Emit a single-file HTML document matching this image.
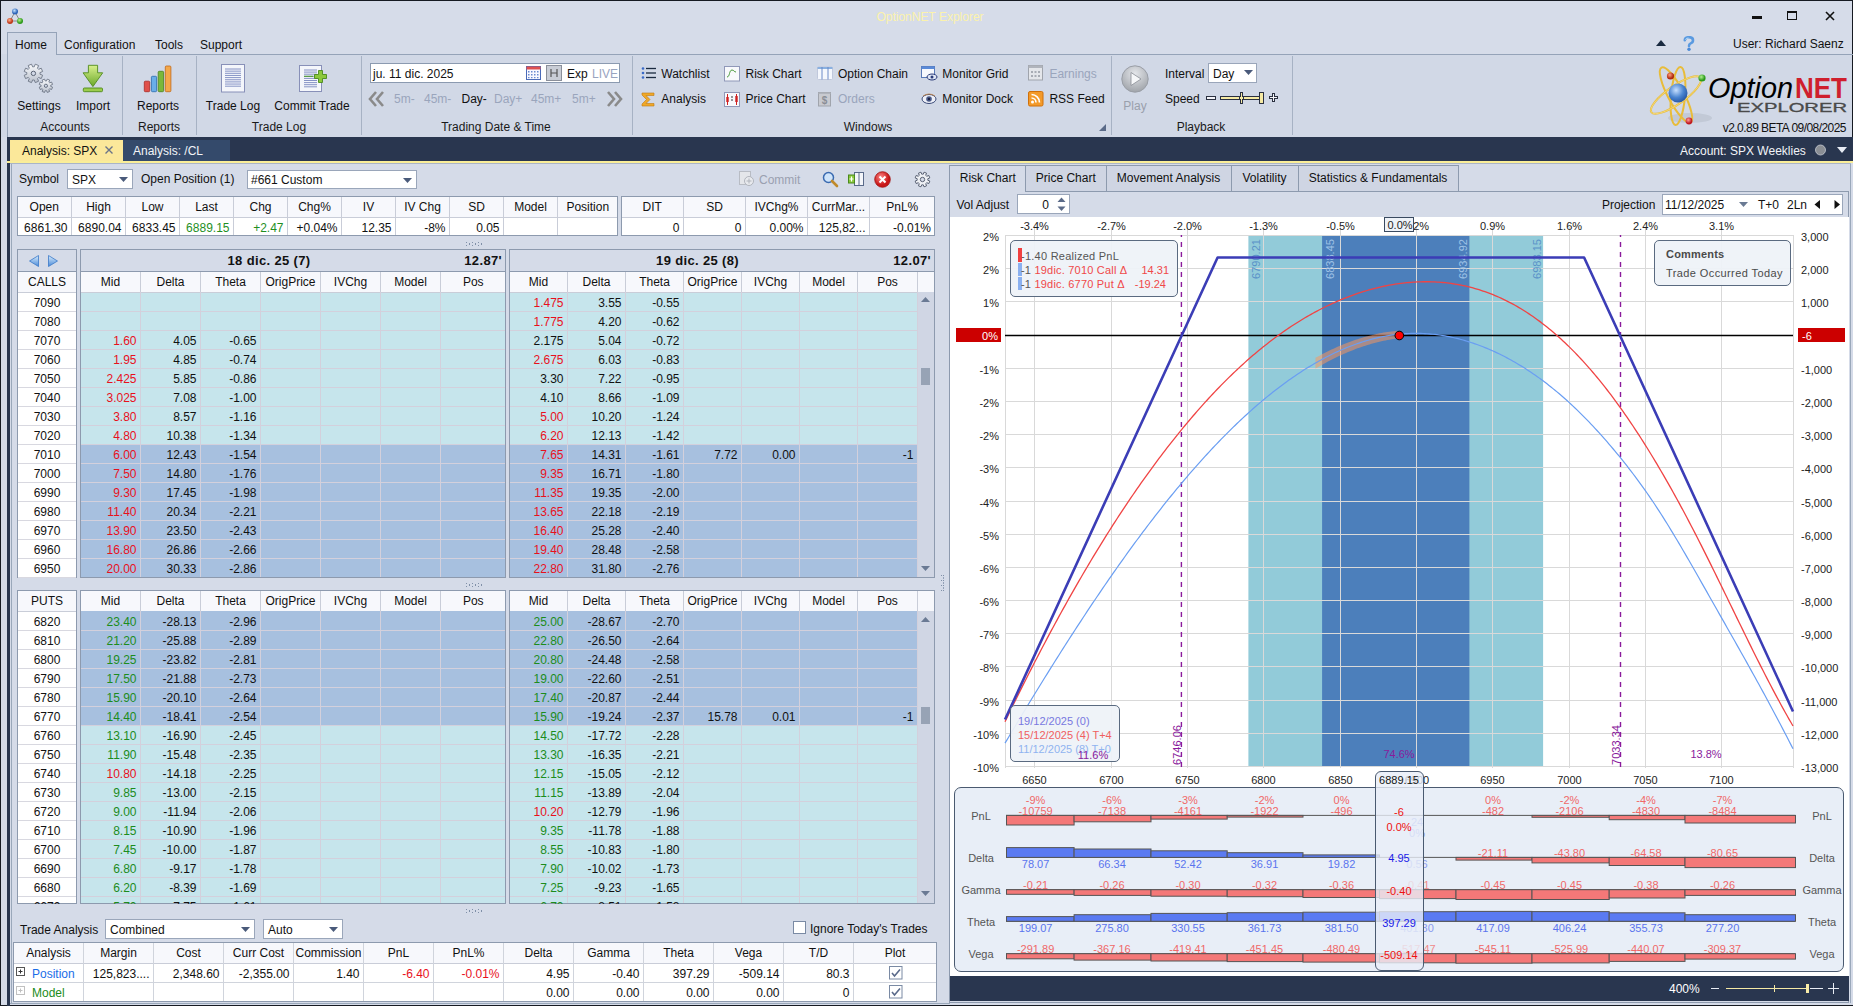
<!DOCTYPE html><html><head><meta charset="utf-8"><style>
html,body{margin:0;padding:0}
body{width:1853px;height:1006px;position:relative;overflow:hidden;font-family:"Liberation Sans",sans-serif;font-size:12px;background:#d5dbe8}
body>div,body>svg{position:absolute}
</style></head><body>
<div style="left:0px;top:0px;width:1853px;height:54px;background:#d6dce9;"></div>
<div style="left:0px;top:54px;width:1853px;height:83px;background:#d1d8e6;"></div>
<div style="left:0px;top:0px;width:1853px;height:1px;background:#161a22"></div>
<div style="left:0px;top:0px;width:1px;height:1006px;background:#161a22"></div>
<div style="left:1852px;top:0px;width:1px;height:1006px;background:#161a22"></div>
<div style="left:0px;top:1005px;width:1853px;height:1px;background:#161a22"></div>
<svg style="left:6px;top:7px" width="20" height="20" viewBox="0 0 20 20">
<line x1="9" y1="5" x2="4" y2="14" stroke="#888" stroke-width="1"/><line x1="9" y1="5" x2="14" y2="14" stroke="#888" stroke-width="1"/><line x1="4" y1="14" x2="14" y2="14" stroke="#888" stroke-width="1"/>
<defs><radialGradient id="gb" cx="40%" cy="35%"><stop offset="0" stop-color="#bfe0ff"/><stop offset="1" stop-color="#2d64b8"/></radialGradient>
<radialGradient id="gr" cx="40%" cy="35%"><stop offset="0" stop-color="#ffb08a"/><stop offset="1" stop-color="#c0381a"/></radialGradient>
<radialGradient id="gg" cx="40%" cy="35%"><stop offset="0" stop-color="#b8f08a"/><stop offset="1" stop-color="#2e9a1c"/></radialGradient></defs>
<circle cx="9" cy="4.5" r="3" fill="url(#gb)"/><circle cx="4" cy="14" r="3" fill="url(#gr)"/><circle cx="14" cy="14" r="3" fill="url(#gg)"/></svg>
<div style="left:780.0px;top:9.5px;width:300px;text-align:center;color:#fbf2ac;font-size:12px;line-height:14px;white-space:nowrap;">OptionNET Explorer</div>
<div style="left:1752px;top:16px;width:10px;height:3px;background:#111;"></div>
<div style="left:1787px;top:11px;width:10px;height:9px;border:1px solid #111;border-top-width:2px;box-sizing:border-box"></div>
<svg style="left:1825px;top:11px" width="10" height="10" viewBox="0 0 10 10"><path d="M1 1L9 9M9 1L1 9" stroke="#111" stroke-width="1.6"/></svg>
<div style="left:7px;top:32px;width:50px;height:23px;border:1px solid #95a3b8;border-bottom:none;box-sizing:border-box;background:#d1d8e6"></div>
<div style="left:56px;top:54px;width:1797px;height:1px;background:#95a3b8"></div>
<div style="left:7px;top:54px;width:1px;height:83px;background:#95a3b8"></div>
<div style="left:15px;top:37.5px;color:#111;font-size:12px;line-height:14px;white-space:nowrap;">Home</div>
<div style="left:64px;top:37.5px;color:#111;font-size:12px;line-height:14px;white-space:nowrap;">Configuration</div>
<div style="left:155px;top:37.5px;color:#111;font-size:12px;line-height:14px;white-space:nowrap;">Tools</div>
<div style="left:200px;top:37.5px;color:#111;font-size:12px;line-height:14px;white-space:nowrap;">Support</div>
<svg style="left:1656px;top:40px" width="10" height="6" viewBox="0 0 10 6"><path d="M0 6L5 0L10 6Z" fill="#1a2a40"/></svg>
<svg style="left:1682px;top:36px" width="14" height="16" viewBox="0 0 14 16"><path d="M2.8 4.2 Q3 1.2 7 1.2 Q11 1.2 11 4.2 Q11 6.4 8.6 7.4 Q7 8 7 10" stroke="#5a9ae0" stroke-width="2.6" fill="none" stroke-linecap="round"/><path d="M3.5 3.6 Q4 2 6.5 2" stroke="#c8e6fa" stroke-width="0.9" fill="none"/><circle cx="7" cy="13.2" r="1.7" fill="#4a8ad8"/></svg>
<div style="left:1733px;top:36.5px;color:#111;font-size:12px;line-height:14px;white-space:nowrap;">User: Richard Saenz</div>
<div style="left:122px;top:56px;width:1px;height:79px;background:#a7b2c4"></div>
<div style="left:196px;top:56px;width:1px;height:79px;background:#a7b2c4"></div>
<div style="left:361px;top:56px;width:1px;height:79px;background:#a7b2c4"></div>
<div style="left:632px;top:56px;width:1px;height:79px;background:#a7b2c4"></div>
<div style="left:1111px;top:56px;width:1px;height:79px;background:#a7b2c4"></div>
<div style="left:1292px;top:56px;width:1px;height:79px;background:#a7b2c4"></div>
<div style="left:-85.0px;top:119.5px;width:300px;text-align:center;color:#1a1a1a;font-size:12px;line-height:14px;white-space:nowrap;">Accounts</div>
<div style="left:9.0px;top:119.5px;width:300px;text-align:center;color:#1a1a1a;font-size:12px;line-height:14px;white-space:nowrap;">Reports</div>
<div style="left:129.0px;top:119.5px;width:300px;text-align:center;color:#1a1a1a;font-size:12px;line-height:14px;white-space:nowrap;">Trade Log</div>
<div style="left:346.0px;top:119.5px;width:300px;text-align:center;color:#1a1a1a;font-size:12px;line-height:14px;white-space:nowrap;">Trading Date &amp; Time</div>
<div style="left:718.0px;top:119.5px;width:300px;text-align:center;color:#1a1a1a;font-size:12px;line-height:14px;white-space:nowrap;">Windows</div>
<div style="left:1051.0px;top:119.5px;width:300px;text-align:center;color:#1a1a1a;font-size:12px;line-height:14px;white-space:nowrap;">Playback</div>
<div style="left:-111.0px;top:98.5px;width:300px;text-align:center;color:#111;font-size:12px;line-height:14px;white-space:nowrap;">Settings</div>
<div style="left:-57.0px;top:98.5px;width:300px;text-align:center;color:#111;font-size:12px;line-height:14px;white-space:nowrap;">Import</div>
<div style="left:8.0px;top:98.5px;width:300px;text-align:center;color:#111;font-size:12px;line-height:14px;white-space:nowrap;">Reports</div>
<div style="left:83.0px;top:98.5px;width:300px;text-align:center;color:#111;font-size:12px;line-height:14px;white-space:nowrap;">Trade Log</div>
<div style="left:162.0px;top:98.5px;width:300px;text-align:center;color:#111;font-size:12px;line-height:14px;white-space:nowrap;">Commit Trade</div>
<div style="left:7px;top:137px;width:1846px;height:26px;background:#29364f;"></div>
<svg style="left:20px;top:60px" width="36" height="36" viewBox="20 60 36 36">
<defs><linearGradient id="ggear" x1="0" y1="0" x2="0" y2="1"><stop offset="0" stop-color="#fafbfd"/><stop offset="1" stop-color="#b9c0cc"/></linearGradient></defs>
<path d="M40.00 73.40L39.95 74.18L42.61 75.27L41.24 78.59L38.58 77.49L38.07 78.07L37.49 78.58L38.59 81.24L35.27 82.61L34.18 79.95L33.40 80.00L32.62 79.95L31.53 82.61L28.21 81.24L29.31 78.58L28.73 78.07L28.22 77.49L25.56 78.59L24.19 75.27L26.85 74.18L26.80 73.40L26.85 72.62L24.19 71.53L25.56 68.21L28.22 69.31L28.73 68.73L29.31 68.22L28.21 65.56L31.53 64.19L32.62 66.85L33.40 66.80L34.18 66.85L35.27 64.19L38.59 65.56L37.49 68.22L38.07 68.73L38.58 69.31L41.24 68.21L42.61 71.53L39.95 72.62Z" fill="url(#ggear)" stroke="#6d7686" stroke-width="0.9"/>
<circle cx="33.4" cy="73.4" r="2.2" fill="#d1d8e6" stroke="#5d6676" stroke-width="1"/>
<path d="M50.70 85.80L50.67 86.36L52.56 87.15L51.57 89.56L49.67 88.77L49.29 89.19L48.87 89.57L49.66 91.47L47.25 92.46L46.46 90.57L45.90 90.60L45.34 90.57L44.55 92.46L42.14 91.47L42.93 89.57L42.51 89.19L42.13 88.77L40.23 89.56L39.24 87.15L41.13 86.36L41.10 85.80L41.13 85.24L39.24 84.45L40.23 82.04L42.13 82.83L42.51 82.41L42.93 82.03L42.14 80.13L44.55 79.14L45.34 81.03L45.90 81.00L46.46 81.03L47.25 79.14L49.66 80.13L48.87 82.03L49.29 82.41L49.67 82.83L51.57 82.04L52.56 84.45L50.67 85.24Z" fill="url(#ggear)" stroke="#6d7686" stroke-width="0.9"/>
<circle cx="45.9" cy="85.8" r="1.6" fill="#d1d8e6" stroke="#5d6676" stroke-width="0.9"/>
</svg>
<svg style="left:80px;top:62px" width="26" height="32" viewBox="80 62 26 32">
<defs><linearGradient id="garr" x1="0" y1="0" x2="0" y2="1"><stop offset="0" stop-color="#d8f08c"/><stop offset="1" stop-color="#6aa82a"/></linearGradient></defs>
<path d="M88.4 65.3H97.6V72.8H102.7L92.9 86.6L83.1 72.8H88.4Z" fill="url(#garr)" stroke="#4f8a1c" stroke-width="0.9"/>
<rect x="83.3" y="88" width="19.2" height="3.7" rx="1" fill="#9ccc4c" stroke="#4f8a1c" stroke-width="0.9"/>
</svg>
<svg style="left:142px;top:64px" width="32" height="30" viewBox="142 64 32 30">
<rect x="144.3" y="81.2" width="5.4" height="10.5" rx="1" fill="#e0504a" stroke="#a82a24" stroke-width="0.8"/>
<rect x="151.4" y="76.3" width="5.2" height="15.4" rx="1" fill="#6aaee8" stroke="#2a6aac" stroke-width="0.8"/>
<rect x="158.2" y="71.3" width="5.4" height="20.4" rx="1" fill="#7ab83a" stroke="#4a8020" stroke-width="0.8"/>
<rect x="165.3" y="66" width="5.6" height="25.7" rx="1" fill="#f4a84a" stroke="#c0681a" stroke-width="0.8"/>
</svg>
<svg style="left:219px;top:62px" width="28" height="33" viewBox="219 62 28 33">
<rect x="221.5" y="64.5" width="23" height="27.5" fill="#f4f6fb" stroke="#8890b8" stroke-width="1"/><line x1="225" y1="69.00" x2="241" y2="69.00" stroke="#6a7ab8" stroke-width="0.8"/><line x1="225" y1="71.15" x2="241" y2="71.15" stroke="#6a7ab8" stroke-width="0.8"/><line x1="225" y1="73.30" x2="241" y2="73.30" stroke="#6a7ab8" stroke-width="0.8"/><line x1="225" y1="75.45" x2="241" y2="75.45" stroke="#6a7ab8" stroke-width="0.8"/><line x1="225" y1="77.60" x2="241" y2="77.60" stroke="#6a7ab8" stroke-width="0.8"/><line x1="225" y1="79.75" x2="241" y2="79.75" stroke="#6a7ab8" stroke-width="0.8"/><line x1="225" y1="81.90" x2="241" y2="81.90" stroke="#6a7ab8" stroke-width="0.8"/><line x1="225" y1="84.05" x2="241" y2="84.05" stroke="#6a7ab8" stroke-width="0.8"/><line x1="225" y1="86.20" x2="241" y2="86.20" stroke="#6a7ab8" stroke-width="0.8"/></svg>
<svg style="left:297px;top:62px" width="34" height="33" viewBox="297 62 34 33">
<rect x="299.5" y="65.5" width="22" height="26" fill="#f4f6fb" stroke="#8890b8" stroke-width="1"/><line x1="304" y1="70.00" x2="317" y2="70.00" stroke="#6a7ab8" stroke-width="0.8"/><line x1="304" y1="72.10" x2="317" y2="72.10" stroke="#6a7ab8" stroke-width="0.8"/><line x1="304" y1="74.20" x2="317" y2="74.20" stroke="#6a7ab8" stroke-width="0.8"/><line x1="304" y1="76.30" x2="317" y2="76.30" stroke="#6a7ab8" stroke-width="0.8"/><line x1="304" y1="78.40" x2="317" y2="78.40" stroke="#6a7ab8" stroke-width="0.8"/><line x1="304" y1="80.50" x2="317" y2="80.50" stroke="#6a7ab8" stroke-width="0.8"/><line x1="304" y1="82.60" x2="317" y2="82.60" stroke="#6a7ab8" stroke-width="0.8"/><line x1="304" y1="84.70" x2="317" y2="84.70" stroke="#6a7ab8" stroke-width="0.8"/><line x1="304" y1="86.80" x2="317" y2="86.80" stroke="#6a7ab8" stroke-width="0.8"/>
<line x1="304" y1="76.3" x2="313" y2="76.3" stroke="#4a9a2a" stroke-width="1"/>
<path d="M318.5 70.5H322.5V74.5H326.5V78.5H322.5V82.5H318.5V78.5H314.5V74.5H318.5Z" fill="#8cc83c" stroke="#4a8a1c" stroke-width="0.9"/>
</svg>
<div style="left:370px;top:63px;width:250px;height:20px;background:#fff;border:1px solid #8b9ab0;box-sizing:border-box;"></div>
<div style="left:373px;top:66.9px;color:#111;font-size:12px;line-height:14px;white-space:nowrap;">ju. 11 dic. 2025</div>
<svg style="left:525px;top:65px" width="18" height="16" viewBox="525 65 18 16">
<rect x="526.5" y="66.5" width="14" height="13" fill="#f8f8ff" stroke="#4a6ab8" stroke-width="1"/>
<rect x="526.5" y="66.5" width="14" height="3" fill="#e05050"/>
<g fill="#6a8ad0"><rect x="528" y="71" width="1.5" height="1.5"/><rect x="531" y="71" width="1.5" height="1.5"/><rect x="534" y="71" width="1.5" height="1.5"/><rect x="537" y="71" width="1.5" height="1.5"/>
<rect x="528" y="74" width="1.5" height="1.5"/><rect x="531" y="74" width="1.5" height="1.5"/><rect x="534" y="74" width="1.5" height="1.5"/><rect x="537" y="74" width="1.5" height="1.5"/>
<rect x="528" y="77" width="1.5" height="1.2"/><rect x="531" y="77" width="1.5" height="1.2"/><rect x="534" y="77" width="1.5" height="1.2"/><rect x="537" y="77" width="1.5" height="1.2"/></g></svg>
<div style="left:546px;top:65px;width:16px;height:16px;background:#c9cdd6;border:1px solid #8a8f9a;box-sizing:border-box"></div>
<svg style="left:546px;top:65px" width="16" height="16" viewBox="0 0 16 16"><path d="M5 4V12M11 4V12M5 8H11" stroke="#555" stroke-width="1.2"/></svg>
<div style="left:567px;top:66.9px;color:#111;font-size:12px;line-height:14px;white-space:nowrap;">Exp</div>
<div style="left:592px;top:66.9px;color:#98a4bf;font-size:12px;line-height:14px;white-space:nowrap;">LIVE</div>
<svg style="left:367px;top:90px" width="20" height="18" viewBox="0 0 20 18"><path d="M9 2L3 9L9 16M16 2L10 9L16 16" stroke="#8a8a8a" stroke-width="2.6" fill="none"/></svg>
<svg style="left:604px;top:90px" width="20" height="18" viewBox="0 0 20 18"><path d="M4 2L10 9L4 16M11 2L17 9L11 16" stroke="#8a8a8a" stroke-width="2.6" fill="none"/></svg>
<div style="left:394px;top:92.2px;color:#9aa5bc;font-size:12px;line-height:14px;white-space:nowrap;">5m-</div>
<div style="left:424px;top:92.2px;color:#9aa5bc;font-size:12px;line-height:14px;white-space:nowrap;">45m-</div>
<div style="left:461.5px;top:92.2px;color:#111;font-size:12px;line-height:14px;white-space:nowrap;">Day-</div>
<div style="left:494px;top:92.2px;color:#9aa5bc;font-size:12px;line-height:14px;white-space:nowrap;">Day+</div>
<div style="left:531px;top:92.2px;color:#9aa5bc;font-size:12px;line-height:14px;white-space:nowrap;">45m+</div>
<div style="left:572px;top:92.2px;color:#9aa5bc;font-size:12px;line-height:14px;white-space:nowrap;">5m+</div>
<div style="left:661.3px;top:66.8px;color:#111;font-size:12px;line-height:14px;white-space:nowrap;">Watchlist</div>
<div style="left:745.5px;top:66.8px;color:#111;font-size:12px;line-height:14px;white-space:nowrap;">Risk Chart</div>
<div style="left:838px;top:66.8px;color:#111;font-size:12px;line-height:14px;white-space:nowrap;">Option Chain</div>
<div style="left:942.3px;top:66.8px;color:#111;font-size:12px;line-height:14px;white-space:nowrap;">Monitor Grid</div>
<div style="left:1049.4px;top:66.8px;color:#9aa5bc;font-size:12px;line-height:14px;white-space:nowrap;">Earnings</div>
<div style="left:661.3px;top:92.1px;color:#111;font-size:12px;line-height:14px;white-space:nowrap;">Analysis</div>
<div style="left:745.5px;top:92.1px;color:#111;font-size:12px;line-height:14px;white-space:nowrap;">Price Chart</div>
<div style="left:838px;top:92.1px;color:#9aa5bc;font-size:12px;line-height:14px;white-space:nowrap;">Orders</div>
<div style="left:942.3px;top:92.1px;color:#111;font-size:12px;line-height:14px;white-space:nowrap;">Monitor Dock</div>
<div style="left:1049.4px;top:92.1px;color:#111;font-size:12px;line-height:14px;white-space:nowrap;">RSS Feed</div>
<svg style="left:640px;top:66px" width="18" height="14" viewBox="0 0 18 14">
<g fill="#3a6ac8"><circle cx="3" cy="2.5" r="1.3"/><circle cx="3" cy="7" r="1.3"/><circle cx="3" cy="11.5" r="1.3"/></g>
<g stroke="#1a2a40" stroke-width="1.3"><line x1="6" y1="2.5" x2="16" y2="2.5"/><line x1="6" y1="7" x2="16" y2="7"/><line x1="6" y1="11.5" x2="16" y2="11.5"/></g></svg>
<svg style="left:724px;top:66px" width="16" height="16" viewBox="0 0 16 16"><rect x="0.5" y="0.5" width="15" height="14.5" fill="#f8f9fc" stroke="#9098b8"/><path d="M3 11C6 11 5 4 8 4 C10 4 10 6 12 6" stroke="#4a9a3a" stroke-width="1" fill="none"/></svg>
<svg style="left:817px;top:66px" width="16" height="15" viewBox="0 0 16 15"><rect x="0.5" y="1" width="15" height="12.5" rx="1" fill="#f4f7fd" stroke="#c0c8dc"/><rect x="0.5" y="1" width="15" height="2" fill="#8ab0e0"/><line x1="5" y1="1" x2="5" y2="13.5" stroke="#6a8ac8"/><line x1="11" y1="1" x2="11" y2="13.5" stroke="#6a8ac8"/></svg>
<svg style="left:921px;top:66px" width="17" height="15" viewBox="0 0 17 15"><rect x="0.5" y="0.5" width="13" height="11" fill="#f6f8fd" stroke="#5a7ab8"/><rect x="0.5" y="0.5" width="13" height="2.5" fill="#5a8ad8"/><ellipse cx="11" cy="11" rx="5" ry="3" fill="#dfe6f5" stroke="#2a3a78" stroke-width="1"/><circle cx="11" cy="11" r="1.5" fill="#2a3a78"/></svg>
<svg style="left:1028px;top:65px" width="16" height="16" viewBox="0 0 16 16"><rect x="0.5" y="0.5" width="14" height="14.5" fill="#e4e6ea" stroke="#a0a4ac"/><rect x="0.5" y="0.5" width="14" height="2.5" fill="#b0b4bc"/><g fill="#a8acb4"><rect x="3" y="6" width="2" height="2"/><rect x="6.5" y="6" width="2" height="2"/><rect x="10" y="6" width="2" height="2"/><rect x="3" y="10" width="2" height="2"/><rect x="6.5" y="10" width="2" height="2"/><rect x="10" y="10" width="2" height="2"/></g></svg>
<svg style="left:641px;top:92px" width="15" height="15" viewBox="0 0 15 15"><path d="M1 1H13V3.5H5L9 7.5L5 11.5H13V14H1V12L5.5 7.5L1 3Z" fill="#f0a828" stroke="#c07810" stroke-width="0.6"/></svg>
<svg style="left:724px;top:92px" width="16" height="15" viewBox="0 0 16 15"><rect x="0.5" y="0.5" width="15" height="14" fill="#f8f9fc" stroke="#9098b8"/><g stroke="#d02020" stroke-width="1"><line x1="3.5" y1="2" x2="3.5" y2="13"/><line x1="12.5" y1="2" x2="12.5" y2="13"/></g><rect x="2.3" y="5" width="2.4" height="5" fill="#d02020"/><rect x="11.3" y="4" width="2.4" height="6" fill="#d02020"/><path d="M7 5H9M7 8H9" stroke="#333"/></svg>
<svg style="left:818px;top:92px" width="14" height="15" viewBox="0 0 14 15"><rect x="0.5" y="0.5" width="12" height="13.5" fill="#c8cad0" stroke="#a0a4ac"/><rect x="0.5" y="0.5" width="12" height="1.5" fill="#b0b4bc"/><text x="6.5" y="12" font-size="10" font-family="Liberation Sans" text-anchor="middle" fill="#8a8e96" font-weight="bold">$</text></svg>
<svg style="left:921px;top:93px" width="16" height="12" viewBox="0 0 16 12"><ellipse cx="8" cy="6" rx="7" ry="4.5" fill="#eef0f8" stroke="#3a4a78" stroke-width="1"/><circle cx="8" cy="6" r="2.8" fill="#4a5a88"/><circle cx="8" cy="6" r="1.2" fill="#1a2040"/><path d="M2 3Q8 -1 14 3" stroke="#c08040" stroke-width="0.8" fill="none"/></svg>
<svg style="left:1028px;top:91px" width="16" height="16" viewBox="0 0 16 16"><rect x="0.5" y="0.5" width="14.5" height="14.5" rx="1.5" fill="#f39a2a" stroke="#d0700a"/><circle cx="4.5" cy="11" r="1.5" fill="#fff"/><path d="M3.5 7A4.5 4.5 0 0 1 8 11.5M3.5 3.5A8 8 0 0 1 11.5 11.5" stroke="#fff" stroke-width="1.6" fill="none"/></svg>
<svg style="left:1098px;top:123px" width="9" height="9" viewBox="0 0 9 9"><path d="M8 1V8H1Z" fill="#5a6a88"/></svg>
<svg style="left:1120px;top:64px" width="30" height="30" viewBox="0 0 30 30"><defs><radialGradient id="gplay" cx="50%" cy="30%" r="70%"><stop offset="0" stop-color="#e4e6ea"/><stop offset="1" stop-color="#a0a4aa"/></radialGradient></defs><circle cx="15" cy="15" r="13.2" fill="url(#gplay)" stroke="#9a9ea6"/><path d="M11 8.5L21 15L11 21.5Z" fill="#f6f7f9" stroke="#8a8e96" stroke-width="0.8"/></svg>
<div style="left:985.0px;top:98.5px;width:300px;text-align:center;color:#9aa0ac;font-size:12px;line-height:14px;white-space:nowrap;">Play</div>
<div style="left:1165px;top:66.5px;color:#111;font-size:12px;line-height:14px;white-space:nowrap;">Interval</div>
<div style="left:1208px;top:63px;width:49px;height:20px;background:#fff;border:1px solid #9aa6ba;box-sizing:border-box;"></div>
<div style="left:1213px;top:66.5px;color:#111;font-size:12px;line-height:14px;white-space:nowrap;">Day</div>
<svg style="left:1244px;top:70px" width="9" height="5" viewBox="0 0 9 5"><path d="M0 0H9L4.5 5Z" fill="#4a5a7a"/></svg>
<div style="left:1165px;top:91.5px;color:#111;font-size:12px;line-height:14px;white-space:nowrap;">Speed</div>
<svg style="left:1203px;top:88px" width="80" height="18" viewBox="1203 88 80 18" shape-rendering="crispEdges"><rect x="1206.5" y="96.5" width="9" height="3" fill="#f4f4f8" stroke="#2a3040" stroke-width="1"/><rect x="1220.5" y="96.5" width="42" height="3" fill="#f6eaa4" stroke="#2a3040" stroke-width="1"/><path d="M1240.5 92.5H1242.5V96.5H1243.5V99.5H1242.5V103.5H1240.5V99.5H1239.5V96.5H1240.5Z" fill="#f6eaa4" stroke="#2a3040" stroke-width="1"/><rect x="1259.5" y="92.5" width="4" height="11" fill="#f6eaa4" stroke="#2a3040" stroke-width="1"/><path d="M1272.5 93.5H1274.5V96.5H1277.5V98.5H1274.5V101.5H1272.5V98.5H1269.5V96.5H1272.5Z" fill="#f4f4f8" stroke="#2a3040" stroke-width="1"/></svg>
<svg style="left:1640px;top:58px" width="80" height="76" viewBox="1640 58 80 76">
<defs>
<radialGradient id="lgb" cx="40%" cy="35%" r="65%"><stop offset="0" stop-color="#c8e0ff"/><stop offset="0.6" stop-color="#4a84d0"/><stop offset="1" stop-color="#2a5aa8"/></radialGradient>
<radialGradient id="lgr" cx="40%" cy="35%"><stop offset="0" stop-color="#ffa080"/><stop offset="1" stop-color="#b02a10"/></radialGradient>
<radialGradient id="lgr2" cx="40%" cy="35%"><stop offset="0" stop-color="#ffa0a0"/><stop offset="1" stop-color="#c01a20"/></radialGradient>
<radialGradient id="lgg" cx="40%" cy="35%"><stop offset="0" stop-color="#b0f090"/><stop offset="1" stop-color="#2a9a1a"/></radialGradient>
</defs>
<ellipse cx="1690" cy="118" rx="22" ry="5" fill="#b8bfcc" opacity="0.6"/>
<g fill="none" stroke="#e8bc3a" stroke-width="2">
<ellipse cx="1676" cy="95" rx="30" ry="9" transform="rotate(-35 1676 95)"/>
<ellipse cx="1676" cy="95" rx="31" ry="8" transform="rotate(62 1676 95)"/>
<ellipse cx="1678" cy="96" rx="29" ry="7" transform="rotate(95 1678 96)"/>
</g>
<g fill="none" stroke="#fff1b0" stroke-width="0.6" opacity="0.8">
<ellipse cx="1676" cy="95" rx="30" ry="9" transform="rotate(-35 1676 95)"/>
</g>
<circle cx="1678" cy="93" r="9.5" fill="url(#lgb)"/>
<circle cx="1670.5" cy="76" r="3.6" fill="url(#lgr)"/>
<circle cx="1702" cy="78" r="3.6" fill="url(#lgg)"/>
<circle cx="1689" cy="121" r="3.4" fill="url(#lgr2)"/>
</svg>
<svg style="left:1705px;top:68px" width="146" height="36" viewBox="0 0 146 36"><text x="3" y="29.5" font-size="29" font-family="Liberation Sans" font-style="italic" fill="#000" textLength="85" lengthAdjust="spacingAndGlyphs">Option</text><text x="90" y="29.5" font-size="29" font-family="Liberation Sans" font-weight="bold" fill="#cf1f2d" textLength="52" lengthAdjust="spacingAndGlyphs">NET</text></svg>
<svg style="left:1736px;top:100px" width="113" height="14" viewBox="0 0 113 14"><text x="1" y="11.6" font-size="13" font-family="Liberation Sans" fill="#4a4a4a" textLength="110" lengthAdjust="spacingAndGlyphs" stroke="#4a4a4a" stroke-width="0.3">EXPLORER</text></svg>
<div style="left:1546px;top:120.8px;width:300px;text-align:right;color:#111;font-size:12px;line-height:14px;white-space:nowrap;letter-spacing:-0.55px">v2.0.89 BETA 09/08/2025</div>
<div style="left:10px;top:140px;width:113px;height:21px;background:#fbe89a;"></div>
<div style="left:22px;top:144.0px;color:#111;font-size:12px;line-height:14px;white-space:nowrap;">Analysis: SPX</div>
<svg style="left:104px;top:145px" width="10" height="10" viewBox="0 0 10 10"><path d="M1.5 1.5L8.5 8.5M8.5 1.5L1.5 8.5" stroke="#6a7488" stroke-width="1.4"/></svg>
<div style="left:123px;top:140px;width:107px;height:21px;background:#344a6b;"></div>
<div style="left:133px;top:144.0px;color:#f2f4f8;font-size:12px;line-height:14px;white-space:nowrap;">Analysis: /CL</div>
<div style="left:1680px;top:144.0px;color:#f2f4f8;font-size:12px;line-height:14px;white-space:nowrap;">Account: SPX Weeklies</div>
<svg style="left:1814px;top:143px" width="14" height="14" viewBox="0 0 14 14"><circle cx="6.5" cy="7" r="5" fill="#8a8e94" stroke="#c8ccd4" stroke-width="0.8"/></svg>
<svg style="left:1837px;top:147px" width="10" height="6" viewBox="0 0 10 6"><path d="M0 0H10L5 6Z" fill="#e8ecf4"/></svg>
<div style="left:7px;top:161px;width:1846px;height:2px;background:#faee98"></div>
<div style="left:10px;top:163px;width:1843px;height:842px;background:#d5dbe8;"></div>
<div style="left:7px;top:163px;width:3px;height:843px;background:#29364f;"></div>
<div style="left:11px;top:163px;width:1px;height:840px;background:#9aa8ba"></div>
<div style="left:10px;top:1003px;width:940px;height:1px;background:#9aa8ba"></div>
<div style="left:19px;top:172.2px;color:#111;font-size:12px;line-height:14px;white-space:nowrap;">Symbol</div>
<div style="left:67px;top:169px;width:66px;height:20px;background:#fff;border:1px solid #9aa6ba;box-sizing:border-box;"></div>
<div style="left:72px;top:172.5px;color:#111;font-size:12px;line-height:14px;white-space:nowrap;">SPX</div>
<svg style="left:119px;top:177.0px" width="9" height="5" viewBox="0 0 9 5"><path d="M0 0H9L4.5 5Z" fill="#4a5a7a"/></svg>
<div style="left:141px;top:172.2px;color:#111;font-size:12px;line-height:14px;white-space:nowrap;">Open Position (1)</div>
<div style="left:247px;top:170px;width:170px;height:19px;background:#fff;border:1px solid #9aa6ba;box-sizing:border-box;"></div>
<div style="left:251px;top:173.0px;color:#111;font-size:12px;line-height:14px;white-space:nowrap;">#661 Custom</div>
<svg style="left:403px;top:177.5px" width="9" height="5" viewBox="0 0 9 5"><path d="M0 0H9L4.5 5Z" fill="#4a5a7a"/></svg>
<svg style="left:739px;top:171px" width="16" height="16" viewBox="0 0 16 16"><rect x="0.5" y="0.5" width="11" height="13" fill="#e4e6ea" stroke="#b8bcc4"/><circle cx="10" cy="10" r="4.5" fill="#e8eaee" stroke="#b0b4bc"/><path d="M10 7.5V12.5M7.5 10H12.5" stroke="#b0b4bc"/></svg>
<div style="left:759px;top:172.5px;color:#9aa0b0;font-size:12px;line-height:14px;white-space:nowrap;">Commit</div>
<svg style="left:822px;top:171px" width="17" height="17" viewBox="0 0 17 17"><circle cx="6.5" cy="6.5" r="5" fill="#cfe4fa" stroke="#3a6ab0" stroke-width="1.5"/><path d="M10 10L15 15" stroke="#c08a2a" stroke-width="2.6" stroke-linecap="round"/></svg>
<svg style="left:848px;top:171px" width="17" height="16" viewBox="0 0 17 16"><rect x="6.5" y="1.5" width="9" height="13" fill="#f4f6fa" stroke="#5a6a8a"/><line x1="11" y1="1.5" x2="11" y2="14.5" stroke="#5a6a8a"/><rect x="0.5" y="4" width="6" height="8" fill="#8ac83c" stroke="#4a8a1c"/><path d="M3.5 5.5V10.5M1.5 8H5.5" stroke="#fff" stroke-width="1.2"/></svg>
<svg style="left:874px;top:171px" width="17" height="17" viewBox="0 0 17 17"><defs><radialGradient id="rx" cx="40%" cy="35%"><stop offset="0" stop-color="#ff8a8a"/><stop offset="1" stop-color="#c81818"/></radialGradient></defs><circle cx="8.5" cy="8.5" r="7.8" fill="url(#rx)" stroke="#a01010" stroke-width="0.8"/><path d="M5.5 5.5L11.5 11.5M11.5 5.5L5.5 11.5" stroke="#fff" stroke-width="2"/></svg>
<svg style="left:913px;top:170px" width="19" height="19" viewBox="0 0 19 19"><path d="M14.80 9.50L14.75 10.21L16.83 11.07L15.80 13.57L13.71 12.72L13.25 13.25L12.72 13.71L13.57 15.80L11.07 16.83L10.21 14.75L9.50 14.80L8.79 14.75L7.93 16.83L5.43 15.80L6.28 13.71L5.75 13.25L5.29 12.72L3.20 13.57L2.17 11.07L4.25 10.21L4.20 9.50L4.25 8.79L2.17 7.93L3.20 5.43L5.29 6.28L5.75 5.75L6.28 5.29L5.43 3.20L7.93 2.17L8.79 4.25L9.50 4.20L10.21 4.25L11.07 2.17L13.57 3.20L12.72 5.29L13.25 5.75L13.71 6.28L15.80 5.43L16.83 7.93L14.75 8.79Z" fill="#eef0f4" stroke="#5a6274" stroke-width="1"/><circle cx="9.5" cy="9.5" r="2.2" fill="#d5dbe8" stroke="#5a6274"/></svg>
<div style="left:17px;top:196px;width:601px;height:40px;background:#fff;border:1px solid #8d9aae;box-sizing:border-box;"></div>
<div style="left:18px;top:197px;width:599px;height:20px;background:#f7f8fc;"></div>
<div style="left:18px;top:217px;width:599px;height:1px;background:#c9cdd8"></div>
<div style="left:71px;top:197px;width:1px;height:38px;background:#c9cdd8"></div>
<div style="left:125px;top:197px;width:1px;height:38px;background:#c9cdd8"></div>
<div style="left:179px;top:197px;width:1px;height:38px;background:#c9cdd8"></div>
<div style="left:233px;top:197px;width:1px;height:38px;background:#c9cdd8"></div>
<div style="left:287px;top:197px;width:1px;height:38px;background:#c9cdd8"></div>
<div style="left:341px;top:197px;width:1px;height:38px;background:#c9cdd8"></div>
<div style="left:395px;top:197px;width:1px;height:38px;background:#c9cdd8"></div>
<div style="left:449px;top:197px;width:1px;height:38px;background:#c9cdd8"></div>
<div style="left:503px;top:197px;width:1px;height:38px;background:#c9cdd8"></div>
<div style="left:557px;top:197px;width:1px;height:38px;background:#c9cdd8"></div>
<div style="left:17.0px;top:199.5px;width:54.5px;text-align:center;color:#111;font-size:12px;line-height:14px;white-space:nowrap;">Open</div>
<div style="left:71.5px;top:199.5px;width:54.0px;text-align:center;color:#111;font-size:12px;line-height:14px;white-space:nowrap;">High</div>
<div style="left:125.5px;top:199.5px;width:54.0px;text-align:center;color:#111;font-size:12px;line-height:14px;white-space:nowrap;">Low</div>
<div style="left:179.5px;top:199.5px;width:54.0px;text-align:center;color:#111;font-size:12px;line-height:14px;white-space:nowrap;">Last</div>
<div style="left:233.5px;top:199.5px;width:54.0px;text-align:center;color:#111;font-size:12px;line-height:14px;white-space:nowrap;">Chg</div>
<div style="left:287.5px;top:199.5px;width:54.0px;text-align:center;color:#111;font-size:12px;line-height:14px;white-space:nowrap;">Chg%</div>
<div style="left:341.5px;top:199.5px;width:54.0px;text-align:center;color:#111;font-size:12px;line-height:14px;white-space:nowrap;">IV</div>
<div style="left:395.5px;top:199.5px;width:54.0px;text-align:center;color:#111;font-size:12px;line-height:14px;white-space:nowrap;">IV Chg</div>
<div style="left:449.5px;top:199.5px;width:54.0px;text-align:center;color:#111;font-size:12px;line-height:14px;white-space:nowrap;">SD</div>
<div style="left:503.5px;top:199.5px;width:54.0px;text-align:center;color:#111;font-size:12px;line-height:14px;white-space:nowrap;">Model</div>
<div style="left:557.5px;top:199.5px;width:60.5px;text-align:center;color:#111;font-size:12px;line-height:14px;white-space:nowrap;">Position</div>
<div style="left:13.0px;top:220.5px;width:54.5px;text-align:right;color:#111;font-size:12px;line-height:14px;white-space:nowrap;">6861.30</div>
<div style="left:67.5px;top:220.5px;width:54.0px;text-align:right;color:#111;font-size:12px;line-height:14px;white-space:nowrap;">6890.04</div>
<div style="left:121.5px;top:220.5px;width:54.0px;text-align:right;color:#111;font-size:12px;line-height:14px;white-space:nowrap;">6833.45</div>
<div style="left:175.5px;top:220.5px;width:54.0px;text-align:right;color:#1f8f1f;font-size:12px;line-height:14px;white-space:nowrap;">6889.15</div>
<div style="left:229.5px;top:220.5px;width:54.0px;text-align:right;color:#1f8f1f;font-size:12px;line-height:14px;white-space:nowrap;">+2.47</div>
<div style="left:283.5px;top:220.5px;width:54.0px;text-align:right;color:#111;font-size:12px;line-height:14px;white-space:nowrap;">+0.04%</div>
<div style="left:337.5px;top:220.5px;width:54.0px;text-align:right;color:#111;font-size:12px;line-height:14px;white-space:nowrap;">12.35</div>
<div style="left:391.5px;top:220.5px;width:54.0px;text-align:right;color:#111;font-size:12px;line-height:14px;white-space:nowrap;">-8%</div>
<div style="left:445.5px;top:220.5px;width:54.0px;text-align:right;color:#111;font-size:12px;line-height:14px;white-space:nowrap;">0.05</div>
<div style="left:499.5px;top:220.5px;width:54.0px;text-align:right;color:#111;font-size:12px;line-height:14px;white-space:nowrap;"></div>
<div style="left:553.5px;top:220.5px;width:60.5px;text-align:right;color:#111;font-size:12px;line-height:14px;white-space:nowrap;"></div>
<div style="left:621px;top:196px;width:314px;height:40px;background:#fff;border:1px solid #8d9aae;box-sizing:border-box;"></div>
<div style="left:622px;top:197px;width:312px;height:20px;background:#f7f8fc;"></div>
<div style="left:622px;top:217px;width:312px;height:1px;background:#c9cdd8"></div>
<div style="left:683px;top:197px;width:1px;height:38px;background:#c9cdd8"></div>
<div style="left:745px;top:197px;width:1px;height:38px;background:#c9cdd8"></div>
<div style="left:807px;top:197px;width:1px;height:38px;background:#c9cdd8"></div>
<div style="left:869px;top:197px;width:1px;height:38px;background:#c9cdd8"></div>
<div style="left:621.0px;top:199.5px;width:62.5px;text-align:center;color:#111;font-size:12px;line-height:14px;white-space:nowrap;">DIT</div>
<div style="left:683.5px;top:199.5px;width:62.0px;text-align:center;color:#111;font-size:12px;line-height:14px;white-space:nowrap;">SD</div>
<div style="left:745.5px;top:199.5px;width:62.0px;text-align:center;color:#111;font-size:12px;line-height:14px;white-space:nowrap;">IVChg%</div>
<div style="left:807.5px;top:199.5px;width:62.0px;text-align:center;color:#111;font-size:12px;line-height:14px;white-space:nowrap;">CurrMar...</div>
<div style="left:869.5px;top:199.5px;width:65.5px;text-align:center;color:#111;font-size:12px;line-height:14px;white-space:nowrap;">PnL%</div>
<div style="left:617.0px;top:220.5px;width:62.5px;text-align:right;color:#111;font-size:12px;line-height:14px;white-space:nowrap;">0</div>
<div style="left:679.5px;top:220.5px;width:62.0px;text-align:right;color:#111;font-size:12px;line-height:14px;white-space:nowrap;">0</div>
<div style="left:741.5px;top:220.5px;width:62.0px;text-align:right;color:#111;font-size:12px;line-height:14px;white-space:nowrap;">0.00%</div>
<div style="left:803.5px;top:220.5px;width:62.0px;text-align:right;color:#111;font-size:12px;line-height:14px;white-space:nowrap;">125,82...</div>
<div style="left:865.5px;top:220.5px;width:65.5px;text-align:right;color:#111;font-size:12px;line-height:14px;white-space:nowrap;">-0.01%</div>
<div style="left:17px;top:249px;width:60px;height:329px;background:#fff;border:1px solid #8d9aae;box-sizing:border-box;"></div>
<div style="left:18px;top:250px;width:58px;height:21px;background:#d5dbe8;"></div>
<div style="left:18px;top:271px;width:58px;height:1px;background:#8d9aae"></div>
<svg style="left:28px;top:254px" width="40" height="14" viewBox="0 0 40 14"><defs><linearGradient id="arrg249" x1="0" y1="0" x2="0" y2="1"><stop offset="0" stop-color="#d8ecfc"/><stop offset="1" stop-color="#4a8ad8"/></linearGradient></defs>
<path d="M1.5 7L10.5 1.5V12.5Z" fill="url(#arrg249)" stroke="#3a78c8" stroke-width="0.8"/><path d="M20.5 1.5L29.5 7L20.5 12.5Z" fill="url(#arrg249)" stroke="#3a78c8" stroke-width="0.8"/></svg>
<div style="left:18px;top:272px;width:58px;height:20px;background:#f7f8fc;"></div>
<div style="left:18px;top:292px;width:58px;height:1px;background:#c9cdd8"></div>
<div style="left:18.0px;top:274.5px;width:58px;text-align:center;color:#111;font-size:12px;line-height:14px;white-space:nowrap;">CALLS</div>
<div style="left:18px;top:311px;width:58px;height:1px;background:#d8d8e0"></div>
<div style="left:18.0px;top:295.5px;width:58px;text-align:center;color:#111;font-size:12px;line-height:14px;white-space:nowrap;">7090</div>
<div style="left:18px;top:330px;width:58px;height:1px;background:#d8d8e0"></div>
<div style="left:18.0px;top:314.5px;width:58px;text-align:center;color:#111;font-size:12px;line-height:14px;white-space:nowrap;">7080</div>
<div style="left:18px;top:349px;width:58px;height:1px;background:#d8d8e0"></div>
<div style="left:18.0px;top:333.5px;width:58px;text-align:center;color:#111;font-size:12px;line-height:14px;white-space:nowrap;">7070</div>
<div style="left:18px;top:368px;width:58px;height:1px;background:#d8d8e0"></div>
<div style="left:18.0px;top:352.5px;width:58px;text-align:center;color:#111;font-size:12px;line-height:14px;white-space:nowrap;">7060</div>
<div style="left:18px;top:387px;width:58px;height:1px;background:#d8d8e0"></div>
<div style="left:18.0px;top:371.5px;width:58px;text-align:center;color:#111;font-size:12px;line-height:14px;white-space:nowrap;">7050</div>
<div style="left:18px;top:406px;width:58px;height:1px;background:#d8d8e0"></div>
<div style="left:18.0px;top:390.5px;width:58px;text-align:center;color:#111;font-size:12px;line-height:14px;white-space:nowrap;">7040</div>
<div style="left:18px;top:425px;width:58px;height:1px;background:#d8d8e0"></div>
<div style="left:18.0px;top:409.5px;width:58px;text-align:center;color:#111;font-size:12px;line-height:14px;white-space:nowrap;">7030</div>
<div style="left:18px;top:444px;width:58px;height:1px;background:#d8d8e0"></div>
<div style="left:18.0px;top:428.5px;width:58px;text-align:center;color:#111;font-size:12px;line-height:14px;white-space:nowrap;">7020</div>
<div style="left:18px;top:463px;width:58px;height:1px;background:#d8d8e0"></div>
<div style="left:18.0px;top:447.5px;width:58px;text-align:center;color:#111;font-size:12px;line-height:14px;white-space:nowrap;">7010</div>
<div style="left:18px;top:482px;width:58px;height:1px;background:#d8d8e0"></div>
<div style="left:18.0px;top:466.5px;width:58px;text-align:center;color:#111;font-size:12px;line-height:14px;white-space:nowrap;">7000</div>
<div style="left:18px;top:501px;width:58px;height:1px;background:#d8d8e0"></div>
<div style="left:18.0px;top:485.5px;width:58px;text-align:center;color:#111;font-size:12px;line-height:14px;white-space:nowrap;">6990</div>
<div style="left:18px;top:520px;width:58px;height:1px;background:#d8d8e0"></div>
<div style="left:18.0px;top:504.5px;width:58px;text-align:center;color:#111;font-size:12px;line-height:14px;white-space:nowrap;">6980</div>
<div style="left:18px;top:539px;width:58px;height:1px;background:#d8d8e0"></div>
<div style="left:18.0px;top:523.5px;width:58px;text-align:center;color:#111;font-size:12px;line-height:14px;white-space:nowrap;">6970</div>
<div style="left:18px;top:558px;width:58px;height:1px;background:#d8d8e0"></div>
<div style="left:18.0px;top:542.5px;width:58px;text-align:center;color:#111;font-size:12px;line-height:14px;white-space:nowrap;">6960</div>
<div style="left:18px;top:577px;width:58px;height:1px;background:#d8d8e0"></div>
<div style="left:18.0px;top:561.5px;width:58px;text-align:center;color:#111;font-size:12px;line-height:14px;white-space:nowrap;">6950</div>
<div style="left:80px;top:249px;width:426px;height:329px;background:#c6e5ec;border:1px solid #8d9aae;box-sizing:border-box;"></div>
<div style="left:81px;top:250px;width:424px;height:21px;background:#d5dbe8;"></div>
<div style="left:81px;top:271px;width:424px;height:1px;background:#8d9aae"></div>
<div style="left:169.0px;top:254.0px;width:200px;text-align:center;color:#111;font-size:13px;line-height:14px;white-space:nowrap;font-weight:bold;letter-spacing:0.35px">18 dic. 25 (7)</div>
<div style="left:422px;top:254.0px;width:80px;text-align:right;color:#111;font-size:13px;line-height:14px;white-space:nowrap;font-weight:bold;letter-spacing:0.35px">12.87'</div>
<div style="left:81px;top:272px;width:424px;height:20px;background:#f7f8fc;"></div>
<div style="left:81px;top:292px;width:424px;height:1px;background:#c9cdd8"></div>
<div style="left:81px;top:444px;width:424px;height:19px;background:#a7c0df;"></div>
<div style="left:81px;top:463px;width:424px;height:19px;background:#a7c0df;"></div>
<div style="left:81px;top:482px;width:424px;height:19px;background:#a7c0df;"></div>
<div style="left:81px;top:501px;width:424px;height:19px;background:#a7c0df;"></div>
<div style="left:81px;top:520px;width:424px;height:19px;background:#a7c0df;"></div>
<div style="left:81px;top:539px;width:424px;height:19px;background:#a7c0df;"></div>
<div style="left:81px;top:558px;width:424px;height:19px;background:#a7c0df;"></div>
<div style="left:140px;top:272px;width:1px;height:305px;background:#d3d0dc"></div>
<div style="left:200px;top:272px;width:1px;height:305px;background:#d3d0dc"></div>
<div style="left:260px;top:272px;width:1px;height:305px;background:#d3d0dc"></div>
<div style="left:320px;top:272px;width:1px;height:305px;background:#d3d0dc"></div>
<div style="left:380px;top:272px;width:1px;height:305px;background:#d3d0dc"></div>
<div style="left:440px;top:272px;width:1px;height:305px;background:#d3d0dc"></div>
<div style="left:140px;top:272px;width:1px;height:20px;background:#c9cdd8"></div>
<div style="left:200px;top:272px;width:1px;height:20px;background:#c9cdd8"></div>
<div style="left:260px;top:272px;width:1px;height:20px;background:#c9cdd8"></div>
<div style="left:320px;top:272px;width:1px;height:20px;background:#c9cdd8"></div>
<div style="left:380px;top:272px;width:1px;height:20px;background:#c9cdd8"></div>
<div style="left:440px;top:272px;width:1px;height:20px;background:#c9cdd8"></div>
<div style="left:81px;top:311px;width:424px;height:1px;background:#d3d0dc"></div>
<div style="left:81px;top:330px;width:424px;height:1px;background:#d3d0dc"></div>
<div style="left:81px;top:349px;width:424px;height:1px;background:#d3d0dc"></div>
<div style="left:81px;top:368px;width:424px;height:1px;background:#d3d0dc"></div>
<div style="left:81px;top:387px;width:424px;height:1px;background:#d3d0dc"></div>
<div style="left:81px;top:406px;width:424px;height:1px;background:#d3d0dc"></div>
<div style="left:81px;top:425px;width:424px;height:1px;background:#d3d0dc"></div>
<div style="left:81px;top:444px;width:424px;height:1px;background:#d3d0dc"></div>
<div style="left:81px;top:463px;width:424px;height:1px;background:#d3d0dc"></div>
<div style="left:81px;top:482px;width:424px;height:1px;background:#d3d0dc"></div>
<div style="left:81px;top:501px;width:424px;height:1px;background:#d3d0dc"></div>
<div style="left:81px;top:520px;width:424px;height:1px;background:#d3d0dc"></div>
<div style="left:81px;top:539px;width:424px;height:1px;background:#d3d0dc"></div>
<div style="left:81px;top:558px;width:424px;height:1px;background:#d3d0dc"></div>
<div style="left:80.5px;top:274.5px;width:60.0px;text-align:center;color:#111;font-size:12px;line-height:14px;white-space:nowrap;">Mid</div>
<div style="left:140.5px;top:274.5px;width:60.0px;text-align:center;color:#111;font-size:12px;line-height:14px;white-space:nowrap;">Delta</div>
<div style="left:200.5px;top:274.5px;width:60.0px;text-align:center;color:#111;font-size:12px;line-height:14px;white-space:nowrap;">Theta</div>
<div style="left:260.5px;top:274.5px;width:60.0px;text-align:center;color:#111;font-size:12px;line-height:14px;white-space:nowrap;">OrigPrice</div>
<div style="left:320.5px;top:274.5px;width:60.0px;text-align:center;color:#111;font-size:12px;line-height:14px;white-space:nowrap;">IVChg</div>
<div style="left:380.5px;top:274.5px;width:60.0px;text-align:center;color:#111;font-size:12px;line-height:14px;white-space:nowrap;">Model</div>
<div style="left:440.5px;top:274.5px;width:65.5px;text-align:center;color:#111;font-size:12px;line-height:14px;white-space:nowrap;">Pos</div>
<div style="left:76.5px;top:333.5px;width:60px;text-align:right;color:#e8101c;font-size:12px;line-height:14px;white-space:nowrap;">1.60</div>
<div style="left:136.5px;top:333.5px;width:60px;text-align:right;color:#111;font-size:12px;line-height:14px;white-space:nowrap;">4.05</div>
<div style="left:196.5px;top:333.5px;width:60px;text-align:right;color:#111;font-size:12px;line-height:14px;white-space:nowrap;">-0.65</div>
<div style="left:76.5px;top:352.5px;width:60px;text-align:right;color:#e8101c;font-size:12px;line-height:14px;white-space:nowrap;">1.95</div>
<div style="left:136.5px;top:352.5px;width:60px;text-align:right;color:#111;font-size:12px;line-height:14px;white-space:nowrap;">4.85</div>
<div style="left:196.5px;top:352.5px;width:60px;text-align:right;color:#111;font-size:12px;line-height:14px;white-space:nowrap;">-0.74</div>
<div style="left:76.5px;top:371.5px;width:60px;text-align:right;color:#e8101c;font-size:12px;line-height:14px;white-space:nowrap;">2.425</div>
<div style="left:136.5px;top:371.5px;width:60px;text-align:right;color:#111;font-size:12px;line-height:14px;white-space:nowrap;">5.85</div>
<div style="left:196.5px;top:371.5px;width:60px;text-align:right;color:#111;font-size:12px;line-height:14px;white-space:nowrap;">-0.86</div>
<div style="left:76.5px;top:390.5px;width:60px;text-align:right;color:#e8101c;font-size:12px;line-height:14px;white-space:nowrap;">3.025</div>
<div style="left:136.5px;top:390.5px;width:60px;text-align:right;color:#111;font-size:12px;line-height:14px;white-space:nowrap;">7.08</div>
<div style="left:196.5px;top:390.5px;width:60px;text-align:right;color:#111;font-size:12px;line-height:14px;white-space:nowrap;">-1.00</div>
<div style="left:76.5px;top:409.5px;width:60px;text-align:right;color:#e8101c;font-size:12px;line-height:14px;white-space:nowrap;">3.80</div>
<div style="left:136.5px;top:409.5px;width:60px;text-align:right;color:#111;font-size:12px;line-height:14px;white-space:nowrap;">8.57</div>
<div style="left:196.5px;top:409.5px;width:60px;text-align:right;color:#111;font-size:12px;line-height:14px;white-space:nowrap;">-1.16</div>
<div style="left:76.5px;top:428.5px;width:60px;text-align:right;color:#e8101c;font-size:12px;line-height:14px;white-space:nowrap;">4.80</div>
<div style="left:136.5px;top:428.5px;width:60px;text-align:right;color:#111;font-size:12px;line-height:14px;white-space:nowrap;">10.38</div>
<div style="left:196.5px;top:428.5px;width:60px;text-align:right;color:#111;font-size:12px;line-height:14px;white-space:nowrap;">-1.34</div>
<div style="left:76.5px;top:447.5px;width:60px;text-align:right;color:#e8101c;font-size:12px;line-height:14px;white-space:nowrap;">6.00</div>
<div style="left:136.5px;top:447.5px;width:60px;text-align:right;color:#111;font-size:12px;line-height:14px;white-space:nowrap;">12.43</div>
<div style="left:196.5px;top:447.5px;width:60px;text-align:right;color:#111;font-size:12px;line-height:14px;white-space:nowrap;">-1.54</div>
<div style="left:76.5px;top:466.5px;width:60px;text-align:right;color:#e8101c;font-size:12px;line-height:14px;white-space:nowrap;">7.50</div>
<div style="left:136.5px;top:466.5px;width:60px;text-align:right;color:#111;font-size:12px;line-height:14px;white-space:nowrap;">14.80</div>
<div style="left:196.5px;top:466.5px;width:60px;text-align:right;color:#111;font-size:12px;line-height:14px;white-space:nowrap;">-1.76</div>
<div style="left:76.5px;top:485.5px;width:60px;text-align:right;color:#e8101c;font-size:12px;line-height:14px;white-space:nowrap;">9.30</div>
<div style="left:136.5px;top:485.5px;width:60px;text-align:right;color:#111;font-size:12px;line-height:14px;white-space:nowrap;">17.45</div>
<div style="left:196.5px;top:485.5px;width:60px;text-align:right;color:#111;font-size:12px;line-height:14px;white-space:nowrap;">-1.98</div>
<div style="left:76.5px;top:504.5px;width:60px;text-align:right;color:#e8101c;font-size:12px;line-height:14px;white-space:nowrap;">11.40</div>
<div style="left:136.5px;top:504.5px;width:60px;text-align:right;color:#111;font-size:12px;line-height:14px;white-space:nowrap;">20.34</div>
<div style="left:196.5px;top:504.5px;width:60px;text-align:right;color:#111;font-size:12px;line-height:14px;white-space:nowrap;">-2.21</div>
<div style="left:76.5px;top:523.5px;width:60px;text-align:right;color:#e8101c;font-size:12px;line-height:14px;white-space:nowrap;">13.90</div>
<div style="left:136.5px;top:523.5px;width:60px;text-align:right;color:#111;font-size:12px;line-height:14px;white-space:nowrap;">23.50</div>
<div style="left:196.5px;top:523.5px;width:60px;text-align:right;color:#111;font-size:12px;line-height:14px;white-space:nowrap;">-2.43</div>
<div style="left:76.5px;top:542.5px;width:60px;text-align:right;color:#e8101c;font-size:12px;line-height:14px;white-space:nowrap;">16.80</div>
<div style="left:136.5px;top:542.5px;width:60px;text-align:right;color:#111;font-size:12px;line-height:14px;white-space:nowrap;">26.86</div>
<div style="left:196.5px;top:542.5px;width:60px;text-align:right;color:#111;font-size:12px;line-height:14px;white-space:nowrap;">-2.66</div>
<div style="left:76.5px;top:561.5px;width:60px;text-align:right;color:#e8101c;font-size:12px;line-height:14px;white-space:nowrap;">20.00</div>
<div style="left:136.5px;top:561.5px;width:60px;text-align:right;color:#111;font-size:12px;line-height:14px;white-space:nowrap;">30.33</div>
<div style="left:196.5px;top:561.5px;width:60px;text-align:right;color:#111;font-size:12px;line-height:14px;white-space:nowrap;">-2.86</div>
<div style="left:509px;top:249px;width:426px;height:329px;background:#c6e5ec;border:1px solid #8d9aae;box-sizing:border-box;"></div>
<div style="left:510px;top:250px;width:424px;height:21px;background:#d5dbe8;"></div>
<div style="left:510px;top:271px;width:424px;height:1px;background:#8d9aae"></div>
<div style="left:597.6px;top:254.0px;width:200px;text-align:center;color:#111;font-size:13px;line-height:14px;white-space:nowrap;font-weight:bold;letter-spacing:0.35px">19 dic. 25 (8)</div>
<div style="left:851px;top:254.0px;width:80px;text-align:right;color:#111;font-size:13px;line-height:14px;white-space:nowrap;font-weight:bold;letter-spacing:0.35px">12.07'</div>
<div style="left:510px;top:272px;width:424px;height:20px;background:#f7f8fc;"></div>
<div style="left:510px;top:292px;width:424px;height:1px;background:#c9cdd8"></div>
<div style="left:510px;top:444px;width:407px;height:19px;background:#a7c0df;"></div>
<div style="left:510px;top:463px;width:407px;height:19px;background:#a7c0df;"></div>
<div style="left:510px;top:482px;width:407px;height:19px;background:#a7c0df;"></div>
<div style="left:510px;top:501px;width:407px;height:19px;background:#a7c0df;"></div>
<div style="left:510px;top:520px;width:407px;height:19px;background:#a7c0df;"></div>
<div style="left:510px;top:539px;width:407px;height:19px;background:#a7c0df;"></div>
<div style="left:510px;top:558px;width:407px;height:19px;background:#a7c0df;"></div>
<div style="left:567px;top:272px;width:1px;height:305px;background:#d3d0dc"></div>
<div style="left:625px;top:272px;width:1px;height:305px;background:#d3d0dc"></div>
<div style="left:683px;top:272px;width:1px;height:305px;background:#d3d0dc"></div>
<div style="left:741px;top:272px;width:1px;height:305px;background:#d3d0dc"></div>
<div style="left:799px;top:272px;width:1px;height:305px;background:#d3d0dc"></div>
<div style="left:857px;top:272px;width:1px;height:305px;background:#d3d0dc"></div>
<div style="left:917px;top:272px;width:1px;height:305px;background:#d3d0dc"></div>
<div style="left:567px;top:272px;width:1px;height:20px;background:#c9cdd8"></div>
<div style="left:625px;top:272px;width:1px;height:20px;background:#c9cdd8"></div>
<div style="left:683px;top:272px;width:1px;height:20px;background:#c9cdd8"></div>
<div style="left:741px;top:272px;width:1px;height:20px;background:#c9cdd8"></div>
<div style="left:799px;top:272px;width:1px;height:20px;background:#c9cdd8"></div>
<div style="left:857px;top:272px;width:1px;height:20px;background:#c9cdd8"></div>
<div style="left:917px;top:272px;width:1px;height:20px;background:#c9cdd8"></div>
<div style="left:510px;top:311px;width:407px;height:1px;background:#d3d0dc"></div>
<div style="left:510px;top:330px;width:407px;height:1px;background:#d3d0dc"></div>
<div style="left:510px;top:349px;width:407px;height:1px;background:#d3d0dc"></div>
<div style="left:510px;top:368px;width:407px;height:1px;background:#d3d0dc"></div>
<div style="left:510px;top:387px;width:407px;height:1px;background:#d3d0dc"></div>
<div style="left:510px;top:406px;width:407px;height:1px;background:#d3d0dc"></div>
<div style="left:510px;top:425px;width:407px;height:1px;background:#d3d0dc"></div>
<div style="left:510px;top:444px;width:407px;height:1px;background:#d3d0dc"></div>
<div style="left:510px;top:463px;width:407px;height:1px;background:#d3d0dc"></div>
<div style="left:510px;top:482px;width:407px;height:1px;background:#d3d0dc"></div>
<div style="left:510px;top:501px;width:407px;height:1px;background:#d3d0dc"></div>
<div style="left:510px;top:520px;width:407px;height:1px;background:#d3d0dc"></div>
<div style="left:510px;top:539px;width:407px;height:1px;background:#d3d0dc"></div>
<div style="left:510px;top:558px;width:407px;height:1px;background:#d3d0dc"></div>
<div style="left:509.5px;top:274.5px;width:58.0px;text-align:center;color:#111;font-size:12px;line-height:14px;white-space:nowrap;">Mid</div>
<div style="left:567.5px;top:274.5px;width:58.0px;text-align:center;color:#111;font-size:12px;line-height:14px;white-space:nowrap;">Delta</div>
<div style="left:625.5px;top:274.5px;width:58.0px;text-align:center;color:#111;font-size:12px;line-height:14px;white-space:nowrap;">Theta</div>
<div style="left:683.5px;top:274.5px;width:58.0px;text-align:center;color:#111;font-size:12px;line-height:14px;white-space:nowrap;">OrigPrice</div>
<div style="left:741.5px;top:274.5px;width:58.0px;text-align:center;color:#111;font-size:12px;line-height:14px;white-space:nowrap;">IVChg</div>
<div style="left:799.5px;top:274.5px;width:58.0px;text-align:center;color:#111;font-size:12px;line-height:14px;white-space:nowrap;">Model</div>
<div style="left:857.5px;top:274.5px;width:60.0px;text-align:center;color:#111;font-size:12px;line-height:14px;white-space:nowrap;">Pos</div>
<div style="left:503.5px;top:295.5px;width:60px;text-align:right;color:#e8101c;font-size:12px;line-height:14px;white-space:nowrap;">1.475</div>
<div style="left:561.5px;top:295.5px;width:60px;text-align:right;color:#111;font-size:12px;line-height:14px;white-space:nowrap;">3.55</div>
<div style="left:619.5px;top:295.5px;width:60px;text-align:right;color:#111;font-size:12px;line-height:14px;white-space:nowrap;">-0.55</div>
<div style="left:503.5px;top:314.5px;width:60px;text-align:right;color:#e8101c;font-size:12px;line-height:14px;white-space:nowrap;">1.775</div>
<div style="left:561.5px;top:314.5px;width:60px;text-align:right;color:#111;font-size:12px;line-height:14px;white-space:nowrap;">4.20</div>
<div style="left:619.5px;top:314.5px;width:60px;text-align:right;color:#111;font-size:12px;line-height:14px;white-space:nowrap;">-0.62</div>
<div style="left:503.5px;top:333.5px;width:60px;text-align:right;color:#111;font-size:12px;line-height:14px;white-space:nowrap;">2.175</div>
<div style="left:561.5px;top:333.5px;width:60px;text-align:right;color:#111;font-size:12px;line-height:14px;white-space:nowrap;">5.04</div>
<div style="left:619.5px;top:333.5px;width:60px;text-align:right;color:#111;font-size:12px;line-height:14px;white-space:nowrap;">-0.72</div>
<div style="left:503.5px;top:352.5px;width:60px;text-align:right;color:#e8101c;font-size:12px;line-height:14px;white-space:nowrap;">2.675</div>
<div style="left:561.5px;top:352.5px;width:60px;text-align:right;color:#111;font-size:12px;line-height:14px;white-space:nowrap;">6.03</div>
<div style="left:619.5px;top:352.5px;width:60px;text-align:right;color:#111;font-size:12px;line-height:14px;white-space:nowrap;">-0.83</div>
<div style="left:503.5px;top:371.5px;width:60px;text-align:right;color:#111;font-size:12px;line-height:14px;white-space:nowrap;">3.30</div>
<div style="left:561.5px;top:371.5px;width:60px;text-align:right;color:#111;font-size:12px;line-height:14px;white-space:nowrap;">7.22</div>
<div style="left:619.5px;top:371.5px;width:60px;text-align:right;color:#111;font-size:12px;line-height:14px;white-space:nowrap;">-0.95</div>
<div style="left:503.5px;top:390.5px;width:60px;text-align:right;color:#111;font-size:12px;line-height:14px;white-space:nowrap;">4.10</div>
<div style="left:561.5px;top:390.5px;width:60px;text-align:right;color:#111;font-size:12px;line-height:14px;white-space:nowrap;">8.66</div>
<div style="left:619.5px;top:390.5px;width:60px;text-align:right;color:#111;font-size:12px;line-height:14px;white-space:nowrap;">-1.09</div>
<div style="left:503.5px;top:409.5px;width:60px;text-align:right;color:#e8101c;font-size:12px;line-height:14px;white-space:nowrap;">5.00</div>
<div style="left:561.5px;top:409.5px;width:60px;text-align:right;color:#111;font-size:12px;line-height:14px;white-space:nowrap;">10.20</div>
<div style="left:619.5px;top:409.5px;width:60px;text-align:right;color:#111;font-size:12px;line-height:14px;white-space:nowrap;">-1.24</div>
<div style="left:503.5px;top:428.5px;width:60px;text-align:right;color:#e8101c;font-size:12px;line-height:14px;white-space:nowrap;">6.20</div>
<div style="left:561.5px;top:428.5px;width:60px;text-align:right;color:#111;font-size:12px;line-height:14px;white-space:nowrap;">12.13</div>
<div style="left:619.5px;top:428.5px;width:60px;text-align:right;color:#111;font-size:12px;line-height:14px;white-space:nowrap;">-1.42</div>
<div style="left:503.5px;top:447.5px;width:60px;text-align:right;color:#e8101c;font-size:12px;line-height:14px;white-space:nowrap;">7.65</div>
<div style="left:561.5px;top:447.5px;width:60px;text-align:right;color:#111;font-size:12px;line-height:14px;white-space:nowrap;">14.31</div>
<div style="left:619.5px;top:447.5px;width:60px;text-align:right;color:#111;font-size:12px;line-height:14px;white-space:nowrap;">-1.61</div>
<div style="left:677.5px;top:447.5px;width:60px;text-align:right;color:#111;font-size:12px;line-height:14px;white-space:nowrap;">7.72</div>
<div style="left:735.5px;top:447.5px;width:60px;text-align:right;color:#111;font-size:12px;line-height:14px;white-space:nowrap;">0.00</div>
<div style="left:853.5px;top:447.5px;width:60px;text-align:right;color:#111;font-size:12px;line-height:14px;white-space:nowrap;">-1</div>
<div style="left:503.5px;top:466.5px;width:60px;text-align:right;color:#e8101c;font-size:12px;line-height:14px;white-space:nowrap;">9.35</div>
<div style="left:561.5px;top:466.5px;width:60px;text-align:right;color:#111;font-size:12px;line-height:14px;white-space:nowrap;">16.71</div>
<div style="left:619.5px;top:466.5px;width:60px;text-align:right;color:#111;font-size:12px;line-height:14px;white-space:nowrap;">-1.80</div>
<div style="left:503.5px;top:485.5px;width:60px;text-align:right;color:#e8101c;font-size:12px;line-height:14px;white-space:nowrap;">11.35</div>
<div style="left:561.5px;top:485.5px;width:60px;text-align:right;color:#111;font-size:12px;line-height:14px;white-space:nowrap;">19.35</div>
<div style="left:619.5px;top:485.5px;width:60px;text-align:right;color:#111;font-size:12px;line-height:14px;white-space:nowrap;">-2.00</div>
<div style="left:503.5px;top:504.5px;width:60px;text-align:right;color:#e8101c;font-size:12px;line-height:14px;white-space:nowrap;">13.65</div>
<div style="left:561.5px;top:504.5px;width:60px;text-align:right;color:#111;font-size:12px;line-height:14px;white-space:nowrap;">22.18</div>
<div style="left:619.5px;top:504.5px;width:60px;text-align:right;color:#111;font-size:12px;line-height:14px;white-space:nowrap;">-2.19</div>
<div style="left:503.5px;top:523.5px;width:60px;text-align:right;color:#e8101c;font-size:12px;line-height:14px;white-space:nowrap;">16.40</div>
<div style="left:561.5px;top:523.5px;width:60px;text-align:right;color:#111;font-size:12px;line-height:14px;white-space:nowrap;">25.28</div>
<div style="left:619.5px;top:523.5px;width:60px;text-align:right;color:#111;font-size:12px;line-height:14px;white-space:nowrap;">-2.40</div>
<div style="left:503.5px;top:542.5px;width:60px;text-align:right;color:#e8101c;font-size:12px;line-height:14px;white-space:nowrap;">19.40</div>
<div style="left:561.5px;top:542.5px;width:60px;text-align:right;color:#111;font-size:12px;line-height:14px;white-space:nowrap;">28.48</div>
<div style="left:619.5px;top:542.5px;width:60px;text-align:right;color:#111;font-size:12px;line-height:14px;white-space:nowrap;">-2.58</div>
<div style="left:503.5px;top:561.5px;width:60px;text-align:right;color:#e8101c;font-size:12px;line-height:14px;white-space:nowrap;">22.80</div>
<div style="left:561.5px;top:561.5px;width:60px;text-align:right;color:#111;font-size:12px;line-height:14px;white-space:nowrap;">31.80</div>
<div style="left:619.5px;top:561.5px;width:60px;text-align:right;color:#111;font-size:12px;line-height:14px;white-space:nowrap;">-2.76</div>
<div style="left:918px;top:292px;width:16px;height:285px;background:#d0d6e4;"></div>
<div style="left:918px;top:272px;width:16px;height:20px;background:#f7f8fc;"></div>
<svg style="left:921px;top:297px" width="9" height="5" viewBox="0 0 9 5"><path d="M0 5H9L4.5 0Z" fill="#6a7a94"/></svg>
<svg style="left:921px;top:566px" width="9" height="5" viewBox="0 0 9 5"><path d="M0 0H9L4.5 5Z" fill="#6a7a94"/></svg>
<div style="left:921px;top:368px;width:9px;height:17px;background:#97a3b5;"></div>
<div style="left:17px;top:590px;width:60px;height:314px;background:#fff;border:1px solid #8d9aae;box-sizing:border-box;"></div>
<div style="left:18px;top:591px;width:58px;height:20px;background:#f7f8fc;"></div>
<div style="left:18px;top:611px;width:58px;height:1px;background:#c9cdd8"></div>
<div style="left:18.0px;top:593.5px;width:58px;text-align:center;color:#111;font-size:12px;line-height:14px;white-space:nowrap;">PUTS</div>
<div style="left:18px;top:630px;width:58px;height:1px;background:#d8d8e0"></div>
<div style="left:18.0px;top:614.5px;width:58px;text-align:center;color:#111;font-size:12px;line-height:14px;white-space:nowrap;">6820</div>
<div style="left:18px;top:649px;width:58px;height:1px;background:#d8d8e0"></div>
<div style="left:18.0px;top:633.5px;width:58px;text-align:center;color:#111;font-size:12px;line-height:14px;white-space:nowrap;">6810</div>
<div style="left:18px;top:668px;width:58px;height:1px;background:#d8d8e0"></div>
<div style="left:18.0px;top:652.5px;width:58px;text-align:center;color:#111;font-size:12px;line-height:14px;white-space:nowrap;">6800</div>
<div style="left:18px;top:687px;width:58px;height:1px;background:#d8d8e0"></div>
<div style="left:18.0px;top:671.5px;width:58px;text-align:center;color:#111;font-size:12px;line-height:14px;white-space:nowrap;">6790</div>
<div style="left:18px;top:706px;width:58px;height:1px;background:#d8d8e0"></div>
<div style="left:18.0px;top:690.5px;width:58px;text-align:center;color:#111;font-size:12px;line-height:14px;white-space:nowrap;">6780</div>
<div style="left:18px;top:725px;width:58px;height:1px;background:#d8d8e0"></div>
<div style="left:18.0px;top:709.5px;width:58px;text-align:center;color:#111;font-size:12px;line-height:14px;white-space:nowrap;">6770</div>
<div style="left:18px;top:744px;width:58px;height:1px;background:#d8d8e0"></div>
<div style="left:18.0px;top:728.5px;width:58px;text-align:center;color:#111;font-size:12px;line-height:14px;white-space:nowrap;">6760</div>
<div style="left:18px;top:763px;width:58px;height:1px;background:#d8d8e0"></div>
<div style="left:18.0px;top:747.5px;width:58px;text-align:center;color:#111;font-size:12px;line-height:14px;white-space:nowrap;">6750</div>
<div style="left:18px;top:782px;width:58px;height:1px;background:#d8d8e0"></div>
<div style="left:18.0px;top:766.5px;width:58px;text-align:center;color:#111;font-size:12px;line-height:14px;white-space:nowrap;">6740</div>
<div style="left:18px;top:801px;width:58px;height:1px;background:#d8d8e0"></div>
<div style="left:18.0px;top:785.5px;width:58px;text-align:center;color:#111;font-size:12px;line-height:14px;white-space:nowrap;">6730</div>
<div style="left:18px;top:820px;width:58px;height:1px;background:#d8d8e0"></div>
<div style="left:18.0px;top:804.5px;width:58px;text-align:center;color:#111;font-size:12px;line-height:14px;white-space:nowrap;">6720</div>
<div style="left:18px;top:839px;width:58px;height:1px;background:#d8d8e0"></div>
<div style="left:18.0px;top:823.5px;width:58px;text-align:center;color:#111;font-size:12px;line-height:14px;white-space:nowrap;">6710</div>
<div style="left:18px;top:858px;width:58px;height:1px;background:#d8d8e0"></div>
<div style="left:18.0px;top:842.5px;width:58px;text-align:center;color:#111;font-size:12px;line-height:14px;white-space:nowrap;">6700</div>
<div style="left:18px;top:877px;width:58px;height:1px;background:#d8d8e0"></div>
<div style="left:18.0px;top:861.5px;width:58px;text-align:center;color:#111;font-size:12px;line-height:14px;white-space:nowrap;">6690</div>
<div style="left:18px;top:896px;width:58px;height:1px;background:#d8d8e0"></div>
<div style="left:18.0px;top:880.5px;width:58px;text-align:center;color:#111;font-size:12px;line-height:14px;white-space:nowrap;">6680</div>
<div style="left:18.0px;top:899.5px;width:58px;text-align:center;color:#111;font-size:12px;line-height:14px;white-space:nowrap;">6670</div>
<div style="left:80px;top:590px;width:426px;height:314px;background:#c6e5ec;border:1px solid #8d9aae;box-sizing:border-box;"></div>
<div style="left:81px;top:591px;width:424px;height:20px;background:#f7f8fc;"></div>
<div style="left:81px;top:611px;width:424px;height:1px;background:#c9cdd8"></div>
<div style="left:81px;top:611px;width:424px;height:19px;background:#a7c0df;"></div>
<div style="left:81px;top:630px;width:424px;height:19px;background:#a7c0df;"></div>
<div style="left:81px;top:649px;width:424px;height:19px;background:#a7c0df;"></div>
<div style="left:81px;top:668px;width:424px;height:19px;background:#a7c0df;"></div>
<div style="left:81px;top:687px;width:424px;height:19px;background:#a7c0df;"></div>
<div style="left:81px;top:706px;width:424px;height:19px;background:#a7c0df;"></div>
<div style="left:140px;top:591px;width:1px;height:312px;background:#d3d0dc"></div>
<div style="left:200px;top:591px;width:1px;height:312px;background:#d3d0dc"></div>
<div style="left:260px;top:591px;width:1px;height:312px;background:#d3d0dc"></div>
<div style="left:320px;top:591px;width:1px;height:312px;background:#d3d0dc"></div>
<div style="left:380px;top:591px;width:1px;height:312px;background:#d3d0dc"></div>
<div style="left:440px;top:591px;width:1px;height:312px;background:#d3d0dc"></div>
<div style="left:140px;top:591px;width:1px;height:20px;background:#c9cdd8"></div>
<div style="left:200px;top:591px;width:1px;height:20px;background:#c9cdd8"></div>
<div style="left:260px;top:591px;width:1px;height:20px;background:#c9cdd8"></div>
<div style="left:320px;top:591px;width:1px;height:20px;background:#c9cdd8"></div>
<div style="left:380px;top:591px;width:1px;height:20px;background:#c9cdd8"></div>
<div style="left:440px;top:591px;width:1px;height:20px;background:#c9cdd8"></div>
<div style="left:81px;top:630px;width:424px;height:1px;background:#d3d0dc"></div>
<div style="left:81px;top:649px;width:424px;height:1px;background:#d3d0dc"></div>
<div style="left:81px;top:668px;width:424px;height:1px;background:#d3d0dc"></div>
<div style="left:81px;top:687px;width:424px;height:1px;background:#d3d0dc"></div>
<div style="left:81px;top:706px;width:424px;height:1px;background:#d3d0dc"></div>
<div style="left:81px;top:725px;width:424px;height:1px;background:#d3d0dc"></div>
<div style="left:81px;top:744px;width:424px;height:1px;background:#d3d0dc"></div>
<div style="left:81px;top:763px;width:424px;height:1px;background:#d3d0dc"></div>
<div style="left:81px;top:782px;width:424px;height:1px;background:#d3d0dc"></div>
<div style="left:81px;top:801px;width:424px;height:1px;background:#d3d0dc"></div>
<div style="left:81px;top:820px;width:424px;height:1px;background:#d3d0dc"></div>
<div style="left:81px;top:839px;width:424px;height:1px;background:#d3d0dc"></div>
<div style="left:81px;top:858px;width:424px;height:1px;background:#d3d0dc"></div>
<div style="left:81px;top:877px;width:424px;height:1px;background:#d3d0dc"></div>
<div style="left:81px;top:896px;width:424px;height:1px;background:#d3d0dc"></div>
<div style="left:80.5px;top:593.5px;width:60.0px;text-align:center;color:#111;font-size:12px;line-height:14px;white-space:nowrap;">Mid</div>
<div style="left:140.5px;top:593.5px;width:60.0px;text-align:center;color:#111;font-size:12px;line-height:14px;white-space:nowrap;">Delta</div>
<div style="left:200.5px;top:593.5px;width:60.0px;text-align:center;color:#111;font-size:12px;line-height:14px;white-space:nowrap;">Theta</div>
<div style="left:260.5px;top:593.5px;width:60.0px;text-align:center;color:#111;font-size:12px;line-height:14px;white-space:nowrap;">OrigPrice</div>
<div style="left:320.5px;top:593.5px;width:60.0px;text-align:center;color:#111;font-size:12px;line-height:14px;white-space:nowrap;">IVChg</div>
<div style="left:380.5px;top:593.5px;width:60.0px;text-align:center;color:#111;font-size:12px;line-height:14px;white-space:nowrap;">Model</div>
<div style="left:440.5px;top:593.5px;width:65.5px;text-align:center;color:#111;font-size:12px;line-height:14px;white-space:nowrap;">Pos</div>
<div style="left:76.5px;top:614.5px;width:60px;text-align:right;color:#1c8c1c;font-size:12px;line-height:14px;white-space:nowrap;">23.40</div>
<div style="left:136.5px;top:614.5px;width:60px;text-align:right;color:#111;font-size:12px;line-height:14px;white-space:nowrap;">-28.13</div>
<div style="left:196.5px;top:614.5px;width:60px;text-align:right;color:#111;font-size:12px;line-height:14px;white-space:nowrap;">-2.96</div>
<div style="left:76.5px;top:633.5px;width:60px;text-align:right;color:#1c8c1c;font-size:12px;line-height:14px;white-space:nowrap;">21.20</div>
<div style="left:136.5px;top:633.5px;width:60px;text-align:right;color:#111;font-size:12px;line-height:14px;white-space:nowrap;">-25.88</div>
<div style="left:196.5px;top:633.5px;width:60px;text-align:right;color:#111;font-size:12px;line-height:14px;white-space:nowrap;">-2.89</div>
<div style="left:76.5px;top:652.5px;width:60px;text-align:right;color:#1c8c1c;font-size:12px;line-height:14px;white-space:nowrap;">19.25</div>
<div style="left:136.5px;top:652.5px;width:60px;text-align:right;color:#111;font-size:12px;line-height:14px;white-space:nowrap;">-23.82</div>
<div style="left:196.5px;top:652.5px;width:60px;text-align:right;color:#111;font-size:12px;line-height:14px;white-space:nowrap;">-2.81</div>
<div style="left:76.5px;top:671.5px;width:60px;text-align:right;color:#1c8c1c;font-size:12px;line-height:14px;white-space:nowrap;">17.50</div>
<div style="left:136.5px;top:671.5px;width:60px;text-align:right;color:#111;font-size:12px;line-height:14px;white-space:nowrap;">-21.88</div>
<div style="left:196.5px;top:671.5px;width:60px;text-align:right;color:#111;font-size:12px;line-height:14px;white-space:nowrap;">-2.73</div>
<div style="left:76.5px;top:690.5px;width:60px;text-align:right;color:#1c8c1c;font-size:12px;line-height:14px;white-space:nowrap;">15.90</div>
<div style="left:136.5px;top:690.5px;width:60px;text-align:right;color:#111;font-size:12px;line-height:14px;white-space:nowrap;">-20.10</div>
<div style="left:196.5px;top:690.5px;width:60px;text-align:right;color:#111;font-size:12px;line-height:14px;white-space:nowrap;">-2.64</div>
<div style="left:76.5px;top:709.5px;width:60px;text-align:right;color:#1c8c1c;font-size:12px;line-height:14px;white-space:nowrap;">14.40</div>
<div style="left:136.5px;top:709.5px;width:60px;text-align:right;color:#111;font-size:12px;line-height:14px;white-space:nowrap;">-18.41</div>
<div style="left:196.5px;top:709.5px;width:60px;text-align:right;color:#111;font-size:12px;line-height:14px;white-space:nowrap;">-2.54</div>
<div style="left:76.5px;top:728.5px;width:60px;text-align:right;color:#1c8c1c;font-size:12px;line-height:14px;white-space:nowrap;">13.10</div>
<div style="left:136.5px;top:728.5px;width:60px;text-align:right;color:#111;font-size:12px;line-height:14px;white-space:nowrap;">-16.90</div>
<div style="left:196.5px;top:728.5px;width:60px;text-align:right;color:#111;font-size:12px;line-height:14px;white-space:nowrap;">-2.45</div>
<div style="left:76.5px;top:747.5px;width:60px;text-align:right;color:#1c8c1c;font-size:12px;line-height:14px;white-space:nowrap;">11.90</div>
<div style="left:136.5px;top:747.5px;width:60px;text-align:right;color:#111;font-size:12px;line-height:14px;white-space:nowrap;">-15.48</div>
<div style="left:196.5px;top:747.5px;width:60px;text-align:right;color:#111;font-size:12px;line-height:14px;white-space:nowrap;">-2.35</div>
<div style="left:76.5px;top:766.5px;width:60px;text-align:right;color:#e8101c;font-size:12px;line-height:14px;white-space:nowrap;">10.80</div>
<div style="left:136.5px;top:766.5px;width:60px;text-align:right;color:#111;font-size:12px;line-height:14px;white-space:nowrap;">-14.18</div>
<div style="left:196.5px;top:766.5px;width:60px;text-align:right;color:#111;font-size:12px;line-height:14px;white-space:nowrap;">-2.25</div>
<div style="left:76.5px;top:785.5px;width:60px;text-align:right;color:#1c8c1c;font-size:12px;line-height:14px;white-space:nowrap;">9.85</div>
<div style="left:136.5px;top:785.5px;width:60px;text-align:right;color:#111;font-size:12px;line-height:14px;white-space:nowrap;">-13.00</div>
<div style="left:196.5px;top:785.5px;width:60px;text-align:right;color:#111;font-size:12px;line-height:14px;white-space:nowrap;">-2.15</div>
<div style="left:76.5px;top:804.5px;width:60px;text-align:right;color:#1c8c1c;font-size:12px;line-height:14px;white-space:nowrap;">9.00</div>
<div style="left:136.5px;top:804.5px;width:60px;text-align:right;color:#111;font-size:12px;line-height:14px;white-space:nowrap;">-11.94</div>
<div style="left:196.5px;top:804.5px;width:60px;text-align:right;color:#111;font-size:12px;line-height:14px;white-space:nowrap;">-2.06</div>
<div style="left:76.5px;top:823.5px;width:60px;text-align:right;color:#1c8c1c;font-size:12px;line-height:14px;white-space:nowrap;">8.15</div>
<div style="left:136.5px;top:823.5px;width:60px;text-align:right;color:#111;font-size:12px;line-height:14px;white-space:nowrap;">-10.90</div>
<div style="left:196.5px;top:823.5px;width:60px;text-align:right;color:#111;font-size:12px;line-height:14px;white-space:nowrap;">-1.96</div>
<div style="left:76.5px;top:842.5px;width:60px;text-align:right;color:#1c8c1c;font-size:12px;line-height:14px;white-space:nowrap;">7.45</div>
<div style="left:136.5px;top:842.5px;width:60px;text-align:right;color:#111;font-size:12px;line-height:14px;white-space:nowrap;">-10.00</div>
<div style="left:196.5px;top:842.5px;width:60px;text-align:right;color:#111;font-size:12px;line-height:14px;white-space:nowrap;">-1.87</div>
<div style="left:76.5px;top:861.5px;width:60px;text-align:right;color:#1c8c1c;font-size:12px;line-height:14px;white-space:nowrap;">6.80</div>
<div style="left:136.5px;top:861.5px;width:60px;text-align:right;color:#111;font-size:12px;line-height:14px;white-space:nowrap;">-9.17</div>
<div style="left:196.5px;top:861.5px;width:60px;text-align:right;color:#111;font-size:12px;line-height:14px;white-space:nowrap;">-1.78</div>
<div style="left:76.5px;top:880.5px;width:60px;text-align:right;color:#1c8c1c;font-size:12px;line-height:14px;white-space:nowrap;">6.20</div>
<div style="left:136.5px;top:880.5px;width:60px;text-align:right;color:#111;font-size:12px;line-height:14px;white-space:nowrap;">-8.39</div>
<div style="left:196.5px;top:880.5px;width:60px;text-align:right;color:#111;font-size:12px;line-height:14px;white-space:nowrap;">-1.69</div>
<div style="left:76.5px;top:899.5px;width:60px;text-align:right;color:#1c8c1c;font-size:12px;line-height:14px;white-space:nowrap;">5.70</div>
<div style="left:136.5px;top:899.5px;width:60px;text-align:right;color:#111;font-size:12px;line-height:14px;white-space:nowrap;">-7.75</div>
<div style="left:196.5px;top:899.5px;width:60px;text-align:right;color:#111;font-size:12px;line-height:14px;white-space:nowrap;">-1.61</div>
<div style="left:509px;top:590px;width:426px;height:314px;background:#c6e5ec;border:1px solid #8d9aae;box-sizing:border-box;"></div>
<div style="left:510px;top:591px;width:424px;height:20px;background:#f7f8fc;"></div>
<div style="left:510px;top:611px;width:424px;height:1px;background:#c9cdd8"></div>
<div style="left:510px;top:611px;width:407px;height:19px;background:#a7c0df;"></div>
<div style="left:510px;top:630px;width:407px;height:19px;background:#a7c0df;"></div>
<div style="left:510px;top:649px;width:407px;height:19px;background:#a7c0df;"></div>
<div style="left:510px;top:668px;width:407px;height:19px;background:#a7c0df;"></div>
<div style="left:510px;top:687px;width:407px;height:19px;background:#a7c0df;"></div>
<div style="left:510px;top:706px;width:407px;height:19px;background:#a7c0df;"></div>
<div style="left:567px;top:591px;width:1px;height:312px;background:#d3d0dc"></div>
<div style="left:625px;top:591px;width:1px;height:312px;background:#d3d0dc"></div>
<div style="left:683px;top:591px;width:1px;height:312px;background:#d3d0dc"></div>
<div style="left:741px;top:591px;width:1px;height:312px;background:#d3d0dc"></div>
<div style="left:799px;top:591px;width:1px;height:312px;background:#d3d0dc"></div>
<div style="left:857px;top:591px;width:1px;height:312px;background:#d3d0dc"></div>
<div style="left:917px;top:591px;width:1px;height:312px;background:#d3d0dc"></div>
<div style="left:567px;top:591px;width:1px;height:20px;background:#c9cdd8"></div>
<div style="left:625px;top:591px;width:1px;height:20px;background:#c9cdd8"></div>
<div style="left:683px;top:591px;width:1px;height:20px;background:#c9cdd8"></div>
<div style="left:741px;top:591px;width:1px;height:20px;background:#c9cdd8"></div>
<div style="left:799px;top:591px;width:1px;height:20px;background:#c9cdd8"></div>
<div style="left:857px;top:591px;width:1px;height:20px;background:#c9cdd8"></div>
<div style="left:917px;top:591px;width:1px;height:20px;background:#c9cdd8"></div>
<div style="left:510px;top:630px;width:407px;height:1px;background:#d3d0dc"></div>
<div style="left:510px;top:649px;width:407px;height:1px;background:#d3d0dc"></div>
<div style="left:510px;top:668px;width:407px;height:1px;background:#d3d0dc"></div>
<div style="left:510px;top:687px;width:407px;height:1px;background:#d3d0dc"></div>
<div style="left:510px;top:706px;width:407px;height:1px;background:#d3d0dc"></div>
<div style="left:510px;top:725px;width:407px;height:1px;background:#d3d0dc"></div>
<div style="left:510px;top:744px;width:407px;height:1px;background:#d3d0dc"></div>
<div style="left:510px;top:763px;width:407px;height:1px;background:#d3d0dc"></div>
<div style="left:510px;top:782px;width:407px;height:1px;background:#d3d0dc"></div>
<div style="left:510px;top:801px;width:407px;height:1px;background:#d3d0dc"></div>
<div style="left:510px;top:820px;width:407px;height:1px;background:#d3d0dc"></div>
<div style="left:510px;top:839px;width:407px;height:1px;background:#d3d0dc"></div>
<div style="left:510px;top:858px;width:407px;height:1px;background:#d3d0dc"></div>
<div style="left:510px;top:877px;width:407px;height:1px;background:#d3d0dc"></div>
<div style="left:510px;top:896px;width:407px;height:1px;background:#d3d0dc"></div>
<div style="left:509.5px;top:593.5px;width:58.0px;text-align:center;color:#111;font-size:12px;line-height:14px;white-space:nowrap;">Mid</div>
<div style="left:567.5px;top:593.5px;width:58.0px;text-align:center;color:#111;font-size:12px;line-height:14px;white-space:nowrap;">Delta</div>
<div style="left:625.5px;top:593.5px;width:58.0px;text-align:center;color:#111;font-size:12px;line-height:14px;white-space:nowrap;">Theta</div>
<div style="left:683.5px;top:593.5px;width:58.0px;text-align:center;color:#111;font-size:12px;line-height:14px;white-space:nowrap;">OrigPrice</div>
<div style="left:741.5px;top:593.5px;width:58.0px;text-align:center;color:#111;font-size:12px;line-height:14px;white-space:nowrap;">IVChg</div>
<div style="left:799.5px;top:593.5px;width:58.0px;text-align:center;color:#111;font-size:12px;line-height:14px;white-space:nowrap;">Model</div>
<div style="left:857.5px;top:593.5px;width:60.0px;text-align:center;color:#111;font-size:12px;line-height:14px;white-space:nowrap;">Pos</div>
<div style="left:503.5px;top:614.5px;width:60px;text-align:right;color:#1c8c1c;font-size:12px;line-height:14px;white-space:nowrap;">25.00</div>
<div style="left:561.5px;top:614.5px;width:60px;text-align:right;color:#111;font-size:12px;line-height:14px;white-space:nowrap;">-28.67</div>
<div style="left:619.5px;top:614.5px;width:60px;text-align:right;color:#111;font-size:12px;line-height:14px;white-space:nowrap;">-2.70</div>
<div style="left:503.5px;top:633.5px;width:60px;text-align:right;color:#1c8c1c;font-size:12px;line-height:14px;white-space:nowrap;">22.80</div>
<div style="left:561.5px;top:633.5px;width:60px;text-align:right;color:#111;font-size:12px;line-height:14px;white-space:nowrap;">-26.50</div>
<div style="left:619.5px;top:633.5px;width:60px;text-align:right;color:#111;font-size:12px;line-height:14px;white-space:nowrap;">-2.64</div>
<div style="left:503.5px;top:652.5px;width:60px;text-align:right;color:#1c8c1c;font-size:12px;line-height:14px;white-space:nowrap;">20.80</div>
<div style="left:561.5px;top:652.5px;width:60px;text-align:right;color:#111;font-size:12px;line-height:14px;white-space:nowrap;">-24.48</div>
<div style="left:619.5px;top:652.5px;width:60px;text-align:right;color:#111;font-size:12px;line-height:14px;white-space:nowrap;">-2.58</div>
<div style="left:503.5px;top:671.5px;width:60px;text-align:right;color:#1c8c1c;font-size:12px;line-height:14px;white-space:nowrap;">19.00</div>
<div style="left:561.5px;top:671.5px;width:60px;text-align:right;color:#111;font-size:12px;line-height:14px;white-space:nowrap;">-22.60</div>
<div style="left:619.5px;top:671.5px;width:60px;text-align:right;color:#111;font-size:12px;line-height:14px;white-space:nowrap;">-2.51</div>
<div style="left:503.5px;top:690.5px;width:60px;text-align:right;color:#1c8c1c;font-size:12px;line-height:14px;white-space:nowrap;">17.40</div>
<div style="left:561.5px;top:690.5px;width:60px;text-align:right;color:#111;font-size:12px;line-height:14px;white-space:nowrap;">-20.87</div>
<div style="left:619.5px;top:690.5px;width:60px;text-align:right;color:#111;font-size:12px;line-height:14px;white-space:nowrap;">-2.44</div>
<div style="left:503.5px;top:709.5px;width:60px;text-align:right;color:#1c8c1c;font-size:12px;line-height:14px;white-space:nowrap;">15.90</div>
<div style="left:561.5px;top:709.5px;width:60px;text-align:right;color:#111;font-size:12px;line-height:14px;white-space:nowrap;">-19.24</div>
<div style="left:619.5px;top:709.5px;width:60px;text-align:right;color:#111;font-size:12px;line-height:14px;white-space:nowrap;">-2.37</div>
<div style="left:677.5px;top:709.5px;width:60px;text-align:right;color:#111;font-size:12px;line-height:14px;white-space:nowrap;">15.78</div>
<div style="left:735.5px;top:709.5px;width:60px;text-align:right;color:#111;font-size:12px;line-height:14px;white-space:nowrap;">0.01</div>
<div style="left:853.5px;top:709.5px;width:60px;text-align:right;color:#111;font-size:12px;line-height:14px;white-space:nowrap;">-1</div>
<div style="left:503.5px;top:728.5px;width:60px;text-align:right;color:#1c8c1c;font-size:12px;line-height:14px;white-space:nowrap;">14.50</div>
<div style="left:561.5px;top:728.5px;width:60px;text-align:right;color:#111;font-size:12px;line-height:14px;white-space:nowrap;">-17.72</div>
<div style="left:619.5px;top:728.5px;width:60px;text-align:right;color:#111;font-size:12px;line-height:14px;white-space:nowrap;">-2.28</div>
<div style="left:503.5px;top:747.5px;width:60px;text-align:right;color:#1c8c1c;font-size:12px;line-height:14px;white-space:nowrap;">13.30</div>
<div style="left:561.5px;top:747.5px;width:60px;text-align:right;color:#111;font-size:12px;line-height:14px;white-space:nowrap;">-16.35</div>
<div style="left:619.5px;top:747.5px;width:60px;text-align:right;color:#111;font-size:12px;line-height:14px;white-space:nowrap;">-2.21</div>
<div style="left:503.5px;top:766.5px;width:60px;text-align:right;color:#1c8c1c;font-size:12px;line-height:14px;white-space:nowrap;">12.15</div>
<div style="left:561.5px;top:766.5px;width:60px;text-align:right;color:#111;font-size:12px;line-height:14px;white-space:nowrap;">-15.05</div>
<div style="left:619.5px;top:766.5px;width:60px;text-align:right;color:#111;font-size:12px;line-height:14px;white-space:nowrap;">-2.12</div>
<div style="left:503.5px;top:785.5px;width:60px;text-align:right;color:#1c8c1c;font-size:12px;line-height:14px;white-space:nowrap;">11.15</div>
<div style="left:561.5px;top:785.5px;width:60px;text-align:right;color:#111;font-size:12px;line-height:14px;white-space:nowrap;">-13.89</div>
<div style="left:619.5px;top:785.5px;width:60px;text-align:right;color:#111;font-size:12px;line-height:14px;white-space:nowrap;">-2.04</div>
<div style="left:503.5px;top:804.5px;width:60px;text-align:right;color:#e8101c;font-size:12px;line-height:14px;white-space:nowrap;">10.20</div>
<div style="left:561.5px;top:804.5px;width:60px;text-align:right;color:#111;font-size:12px;line-height:14px;white-space:nowrap;">-12.79</div>
<div style="left:619.5px;top:804.5px;width:60px;text-align:right;color:#111;font-size:12px;line-height:14px;white-space:nowrap;">-1.96</div>
<div style="left:503.5px;top:823.5px;width:60px;text-align:right;color:#1c8c1c;font-size:12px;line-height:14px;white-space:nowrap;">9.35</div>
<div style="left:561.5px;top:823.5px;width:60px;text-align:right;color:#111;font-size:12px;line-height:14px;white-space:nowrap;">-11.78</div>
<div style="left:619.5px;top:823.5px;width:60px;text-align:right;color:#111;font-size:12px;line-height:14px;white-space:nowrap;">-1.88</div>
<div style="left:503.5px;top:842.5px;width:60px;text-align:right;color:#1c8c1c;font-size:12px;line-height:14px;white-space:nowrap;">8.55</div>
<div style="left:561.5px;top:842.5px;width:60px;text-align:right;color:#111;font-size:12px;line-height:14px;white-space:nowrap;">-10.83</div>
<div style="left:619.5px;top:842.5px;width:60px;text-align:right;color:#111;font-size:12px;line-height:14px;white-space:nowrap;">-1.80</div>
<div style="left:503.5px;top:861.5px;width:60px;text-align:right;color:#1c8c1c;font-size:12px;line-height:14px;white-space:nowrap;">7.90</div>
<div style="left:561.5px;top:861.5px;width:60px;text-align:right;color:#111;font-size:12px;line-height:14px;white-space:nowrap;">-10.02</div>
<div style="left:619.5px;top:861.5px;width:60px;text-align:right;color:#111;font-size:12px;line-height:14px;white-space:nowrap;">-1.73</div>
<div style="left:503.5px;top:880.5px;width:60px;text-align:right;color:#1c8c1c;font-size:12px;line-height:14px;white-space:nowrap;">7.25</div>
<div style="left:561.5px;top:880.5px;width:60px;text-align:right;color:#111;font-size:12px;line-height:14px;white-space:nowrap;">-9.23</div>
<div style="left:619.5px;top:880.5px;width:60px;text-align:right;color:#111;font-size:12px;line-height:14px;white-space:nowrap;">-1.65</div>
<div style="left:503.5px;top:899.5px;width:60px;text-align:right;color:#1c8c1c;font-size:12px;line-height:14px;white-space:nowrap;">6.70</div>
<div style="left:561.5px;top:899.5px;width:60px;text-align:right;color:#111;font-size:12px;line-height:14px;white-space:nowrap;">-8.51</div>
<div style="left:619.5px;top:899.5px;width:60px;text-align:right;color:#111;font-size:12px;line-height:14px;white-space:nowrap;">-1.58</div>
<div style="left:918px;top:611px;width:16px;height:292px;background:#d0d6e4;"></div>
<div style="left:918px;top:591px;width:16px;height:20px;background:#f7f8fc;"></div>
<svg style="left:921px;top:617px" width="9" height="5" viewBox="0 0 9 5"><path d="M0 5H9L4.5 0Z" fill="#6a7a94"/></svg>
<svg style="left:921px;top:891px" width="9" height="5" viewBox="0 0 9 5"><path d="M0 0H9L4.5 5Z" fill="#6a7a94"/></svg>
<div style="left:921px;top:707px;width:9px;height:17px;background:#97a3b5;"></div>
<div style="left:12px;top:904px;width:930px;height:12px;background:#d5dbe8;"></div>
<svg style="left:464px;top:241px" width="20" height="6" viewBox="0 0 20 6"><g fill="#8090a8"><rect x="2" y="1" width="1" height="1"/><rect x="5" y="3" width="1" height="1"/><rect x="8" y="1" width="1" height="1"/><rect x="11" y="3" width="1" height="1"/><rect x="14" y="1" width="1" height="1"/><rect x="17" y="3" width="1" height="1"/><rect x="2" y="4" width="1" height="1"/><rect x="5" y="2" width="1" height="1"/><rect x="8" y="4" width="1" height="1"/><rect x="11" y="2" width="1" height="1"/><rect x="14" y="4" width="1" height="1"/><rect x="17" y="2" width="1" height="1"/></g></svg>
<svg style="left:464px;top:582px" width="20" height="6" viewBox="0 0 20 6"><g fill="#8090a8"><rect x="2" y="1" width="1" height="1"/><rect x="5" y="3" width="1" height="1"/><rect x="8" y="1" width="1" height="1"/><rect x="11" y="3" width="1" height="1"/><rect x="14" y="1" width="1" height="1"/><rect x="17" y="3" width="1" height="1"/><rect x="2" y="4" width="1" height="1"/><rect x="5" y="2" width="1" height="1"/><rect x="8" y="4" width="1" height="1"/><rect x="11" y="2" width="1" height="1"/><rect x="14" y="4" width="1" height="1"/><rect x="17" y="2" width="1" height="1"/></g></svg>
<svg style="left:464px;top:908px" width="20" height="6" viewBox="0 0 20 6"><g fill="#8090a8"><rect x="2" y="1" width="1" height="1"/><rect x="5" y="3" width="1" height="1"/><rect x="8" y="1" width="1" height="1"/><rect x="11" y="3" width="1" height="1"/><rect x="14" y="1" width="1" height="1"/><rect x="17" y="3" width="1" height="1"/><rect x="2" y="4" width="1" height="1"/><rect x="5" y="2" width="1" height="1"/><rect x="8" y="4" width="1" height="1"/><rect x="11" y="2" width="1" height="1"/><rect x="14" y="4" width="1" height="1"/><rect x="17" y="2" width="1" height="1"/></g></svg>
<svg style="left:940px;top:573px" width="6" height="20" viewBox="0 0 6 20"><g fill="#8090a8"><rect x="1" y="2.0" width="1" height="1"/><rect x="3" y="2.0" width="1" height="1"/><rect x="3" y="4.5" width="1" height="1"/><rect x="3" y="4.5" width="1" height="1"/><rect x="1" y="7.0" width="1" height="1"/><rect x="3" y="7.0" width="1" height="1"/><rect x="3" y="9.5" width="1" height="1"/><rect x="3" y="9.5" width="1" height="1"/><rect x="1" y="12.0" width="1" height="1"/><rect x="3" y="12.0" width="1" height="1"/><rect x="3" y="14.5" width="1" height="1"/><rect x="3" y="14.5" width="1" height="1"/><rect x="1" y="17.0" width="1" height="1"/><rect x="3" y="17.0" width="1" height="1"/></g></svg>
<div style="left:20px;top:922.5px;color:#111;font-size:12px;line-height:14px;white-space:nowrap;">Trade Analysis</div>
<div style="left:105px;top:919px;width:150px;height:20px;background:#fff;border:1px solid #9aa6ba;box-sizing:border-box;"></div>
<div style="left:110px;top:922.5px;color:#111;font-size:12px;line-height:14px;white-space:nowrap;">Combined</div>
<svg style="left:241px;top:927.0px" width="9" height="5" viewBox="0 0 9 5"><path d="M0 0H9L4.5 5Z" fill="#4a5a7a"/></svg>
<div style="left:263px;top:919px;width:80px;height:20px;background:#fff;border:1px solid #9aa6ba;box-sizing:border-box;"></div>
<div style="left:268px;top:922.5px;color:#111;font-size:12px;line-height:14px;white-space:nowrap;">Auto</div>
<svg style="left:329px;top:927.0px" width="9" height="5" viewBox="0 0 9 5"><path d="M0 0H9L4.5 5Z" fill="#4a5a7a"/></svg>
<div style="left:793px;top:921px;width:13px;height:13px;background:#fff;border:1px solid #7a8aa4;box-sizing:border-box;"></div>
<div style="left:810px;top:921.5px;color:#111;font-size:12px;line-height:14px;white-space:nowrap;">Ignore Today's Trades</div>
<div style="left:13px;top:942px;width:924px;height:60px;background:#fff;border:1px solid #8d9aae;box-sizing:border-box;"></div>
<div style="left:14px;top:943px;width:922px;height:20px;background:#f7f8fc;"></div>
<div style="left:14px;top:963px;width:922px;height:1px;background:#c9cdd8"></div>
<div style="left:14px;top:982px;width:922px;height:1px;background:#d0d4dc"></div>
<div style="left:83px;top:943px;width:1px;height:58px;background:#d0d4dc"></div>
<div style="left:153px;top:943px;width:1px;height:58px;background:#d0d4dc"></div>
<div style="left:223px;top:943px;width:1px;height:58px;background:#d0d4dc"></div>
<div style="left:293px;top:943px;width:1px;height:58px;background:#d0d4dc"></div>
<div style="left:363px;top:943px;width:1px;height:58px;background:#d0d4dc"></div>
<div style="left:433px;top:943px;width:1px;height:58px;background:#d0d4dc"></div>
<div style="left:503px;top:943px;width:1px;height:58px;background:#d0d4dc"></div>
<div style="left:573px;top:943px;width:1px;height:58px;background:#d0d4dc"></div>
<div style="left:643px;top:943px;width:1px;height:58px;background:#d0d4dc"></div>
<div style="left:713px;top:943px;width:1px;height:58px;background:#d0d4dc"></div>
<div style="left:783px;top:943px;width:1px;height:58px;background:#d0d4dc"></div>
<div style="left:853px;top:943px;width:1px;height:58px;background:#d0d4dc"></div>
<div style="left:13.5px;top:945.5px;width:70.0px;text-align:center;color:#111;font-size:12px;line-height:14px;white-space:nowrap;">Analysis</div>
<div style="left:83.5px;top:945.5px;width:70.0px;text-align:center;color:#111;font-size:12px;line-height:14px;white-space:nowrap;">Margin</div>
<div style="left:153.5px;top:945.5px;width:70.0px;text-align:center;color:#111;font-size:12px;line-height:14px;white-space:nowrap;">Cost</div>
<div style="left:223.5px;top:945.5px;width:70.0px;text-align:center;color:#111;font-size:12px;line-height:14px;white-space:nowrap;">Curr Cost</div>
<div style="left:293.5px;top:945.5px;width:70.0px;text-align:center;color:#111;font-size:12px;line-height:14px;white-space:nowrap;">Commission</div>
<div style="left:363.5px;top:945.5px;width:70.0px;text-align:center;color:#111;font-size:12px;line-height:14px;white-space:nowrap;">PnL</div>
<div style="left:433.5px;top:945.5px;width:70.0px;text-align:center;color:#111;font-size:12px;line-height:14px;white-space:nowrap;">PnL%</div>
<div style="left:503.5px;top:945.5px;width:70.0px;text-align:center;color:#111;font-size:12px;line-height:14px;white-space:nowrap;">Delta</div>
<div style="left:573.5px;top:945.5px;width:70.0px;text-align:center;color:#111;font-size:12px;line-height:14px;white-space:nowrap;">Gamma</div>
<div style="left:643.5px;top:945.5px;width:70.0px;text-align:center;color:#111;font-size:12px;line-height:14px;white-space:nowrap;">Theta</div>
<div style="left:713.5px;top:945.5px;width:70.0px;text-align:center;color:#111;font-size:12px;line-height:14px;white-space:nowrap;">Vega</div>
<div style="left:783.5px;top:945.5px;width:70.0px;text-align:center;color:#111;font-size:12px;line-height:14px;white-space:nowrap;">T/D</div>
<div style="left:853.5px;top:945.5px;width:83.0px;text-align:center;color:#111;font-size:12px;line-height:14px;white-space:nowrap;">Plot</div>
<div style="left:79.5px;top:966.5px;width:70px;text-align:right;color:#111;font-size:12px;line-height:14px;white-space:nowrap;">125,823....</div>
<div style="left:149.5px;top:966.5px;width:70px;text-align:right;color:#111;font-size:12px;line-height:14px;white-space:nowrap;">2,348.60</div>
<div style="left:219.5px;top:966.5px;width:70px;text-align:right;color:#111;font-size:12px;line-height:14px;white-space:nowrap;">-2,355.00</div>
<div style="left:289.5px;top:966.5px;width:70px;text-align:right;color:#111;font-size:12px;line-height:14px;white-space:nowrap;">1.40</div>
<div style="left:359.5px;top:966.5px;width:70px;text-align:right;color:#e8101c;font-size:12px;line-height:14px;white-space:nowrap;">-6.40</div>
<div style="left:429.5px;top:966.5px;width:70px;text-align:right;color:#e8101c;font-size:12px;line-height:14px;white-space:nowrap;">-0.01%</div>
<div style="left:499.5px;top:966.5px;width:70px;text-align:right;color:#111;font-size:12px;line-height:14px;white-space:nowrap;">4.95</div>
<div style="left:569.5px;top:966.5px;width:70px;text-align:right;color:#111;font-size:12px;line-height:14px;white-space:nowrap;">-0.40</div>
<div style="left:639.5px;top:966.5px;width:70px;text-align:right;color:#111;font-size:12px;line-height:14px;white-space:nowrap;">397.29</div>
<div style="left:709.5px;top:966.5px;width:70px;text-align:right;color:#111;font-size:12px;line-height:14px;white-space:nowrap;">-509.14</div>
<div style="left:779.5px;top:966.5px;width:70px;text-align:right;color:#111;font-size:12px;line-height:14px;white-space:nowrap;">80.3</div>
<div style="left:499.5px;top:985.5px;width:70px;text-align:right;color:#111;font-size:12px;line-height:14px;white-space:nowrap;">0.00</div>
<div style="left:569.5px;top:985.5px;width:70px;text-align:right;color:#111;font-size:12px;line-height:14px;white-space:nowrap;">0.00</div>
<div style="left:639.5px;top:985.5px;width:70px;text-align:right;color:#111;font-size:12px;line-height:14px;white-space:nowrap;">0.00</div>
<div style="left:709.5px;top:985.5px;width:70px;text-align:right;color:#111;font-size:12px;line-height:14px;white-space:nowrap;">0.00</div>
<div style="left:779.5px;top:985.5px;width:70px;text-align:right;color:#111;font-size:12px;line-height:14px;white-space:nowrap;">0</div>
<svg style="left:16px;top:967px" width="10" height="10" viewBox="0 0 10 10"><rect x="0.5" y="0.5" width="8" height="8" fill="#fff" stroke="#555"/><path d="M2.5 4.5H6.5M4.5 2.5V6.5" stroke="#333"/></svg>
<svg style="left:16px;top:986px" width="10" height="10" viewBox="0 0 10 10"><rect x="0.5" y="0.5" width="8" height="8" fill="#fff" stroke="#c0c0c0"/><path d="M2.5 4.5H6.5M4.5 2.5V6.5" stroke="#c0c0c0"/></svg>
<div style="left:32px;top:966.5px;color:#1a6ee8;font-size:12px;line-height:14px;white-space:nowrap;">Position</div>
<div style="left:32px;top:985.5px;color:#1c8c1c;font-size:12px;line-height:14px;white-space:nowrap;">Model</div>
<svg style="left:889px;top:966px" width="14" height="14" viewBox="0 0 14 14"><rect x="0.5" y="0.5" width="12.5" height="12.5" fill="#fff" stroke="#7a8aa4"/><path d="M3 7L5.5 10L11 3.5" stroke="#5a6a8a" stroke-width="1.6" fill="none"/></svg>
<svg style="left:889px;top:985px" width="14" height="14" viewBox="0 0 14 14"><rect x="0.5" y="0.5" width="12.5" height="12.5" fill="#fff" stroke="#7a8aa4"/><path d="M3 7L5.5 10L11 3.5" stroke="#5a6a8a" stroke-width="1.6" fill="none"/></svg>
<div style="left:949px;top:165px;width:900px;height:838px;background:#d5dbe8;border:1px solid #8d9aae;box-sizing:border-box;"></div>
<div style="left:1458px;top:165px;width:390px;height:1px;background:#d5dbe8"></div>
<div style="left:1848px;top:165px;width:1px;height:26px;background:#d5dbe8"></div>
<div style="left:1850px;top:163px;width:1px;height:840px;background:#9aa8ba"></div>
<div style="left:10px;top:163px;width:1841px;height:1px;background:#aab5c7"></div>
<div style="left:1458px;top:191px;width:391px;height:1px;background:#8d9aae"></div>
<div style="left:1025px;top:166px;width:1px;height:26px;background:#8d9aae"></div>
<div style="left:887.75px;top:171.0px;width:200px;text-align:center;color:#111;font-size:12px;line-height:14px;white-space:nowrap;">Risk Chart</div>
<div style="left:1025px;top:165px;width:82px;height:27px;background:#cfd5e3;border:1px solid #8d9aae;box-sizing:border-box"></div>
<div style="left:965.75px;top:171.0px;width:200px;text-align:center;color:#111;font-size:12px;line-height:14px;white-space:nowrap;">Price Chart</div>
<div style="left:1106px;top:165px;width:126px;height:27px;background:#cfd5e3;border:1px solid #8d9aae;box-sizing:border-box"></div>
<div style="left:1068.5px;top:171.0px;width:200px;text-align:center;color:#111;font-size:12px;line-height:14px;white-space:nowrap;">Movement Analysis</div>
<div style="left:1231px;top:165px;width:68px;height:27px;background:#cfd5e3;border:1px solid #8d9aae;box-sizing:border-box"></div>
<div style="left:1164.5px;top:171.0px;width:200px;text-align:center;color:#111;font-size:12px;line-height:14px;white-space:nowrap;">Volatility</div>
<div style="left:1298px;top:165px;width:161px;height:27px;background:#cfd5e3;border:1px solid #8d9aae;box-sizing:border-box"></div>
<div style="left:1278.0px;top:171.0px;width:200px;text-align:center;color:#111;font-size:12px;line-height:14px;white-space:nowrap;">Statistics &amp; Fundamentals</div>
<div style="left:956.5px;top:197.7px;color:#111;font-size:12px;line-height:14px;white-space:nowrap;">Vol Adjust</div>
<div style="left:1017px;top:194px;width:53px;height:20px;background:#fff;border:1px solid #9aa6ba;box-sizing:border-box;"></div>
<div style="left:1029px;top:197.7px;width:20px;text-align:right;color:#111;font-size:12px;line-height:14px;white-space:nowrap;">0</div>
<svg style="left:1057px;top:197px" width="9" height="15" viewBox="0 0 9 15"><path d="M0.5 5H8.5L4.5 0.5Z" fill="#5a6a88"/><path d="M0.5 9.5H8.5L4.5 14Z" fill="#5a6a88"/></svg>
<div style="left:1602px;top:198.0px;color:#111;font-size:12px;line-height:14px;white-space:nowrap;">Projection</div>
<div style="left:1662px;top:194px;width:181px;height:21px;background:#fff;border:1px solid #9aa6ba;box-sizing:border-box;"></div>
<div style="left:1665px;top:198.0px;color:#111;font-size:12px;line-height:14px;white-space:nowrap;">11/12/2025</div>
<svg style="left:1739px;top:202px" width="9" height="5" viewBox="0 0 9 5"><path d="M0 0H9L4.5 5Z" fill="#6a7a94"/></svg>
<div style="left:1758px;top:198.0px;color:#111;font-size:12px;line-height:14px;white-space:nowrap;">T+0</div>
<div style="left:1787px;top:198.0px;color:#111;font-size:12px;line-height:14px;white-space:nowrap;">2Ln</div>
<svg style="left:1813px;top:199px" width="30" height="11" viewBox="0 0 30 11"><path d="M7 1V10L1.5 5.5Z" fill="#111"/><path d="M21.5 1V10L27 5.5Z" fill="#111"/></svg>
<div style="left:950px;top:217px;width:899px;height:759px;background:#fff;"></div>
<svg style="left:950px;top:217px" width="899" height="759" viewBox="950 217 899 759"><rect x="1248.4" y="236" width="294.7" height="531" fill="#92cbd9"/><rect x="1322.1" y="236" width="147.3" height="531" fill="#4c7fbb"/><line x1="1005" y1="235.5" x2="1794" y2="235.5" stroke="#d9d9d9" stroke-width="1" shape-rendering="crispEdges"/><line x1="1005" y1="268.5" x2="1794" y2="268.5" stroke="#d9d9d9" stroke-width="1" shape-rendering="crispEdges"/><line x1="1005" y1="301.5" x2="1794" y2="301.5" stroke="#d9d9d9" stroke-width="1" shape-rendering="crispEdges"/><line x1="1005" y1="335.5" x2="1794" y2="335.5" stroke="#d9d9d9" stroke-width="1" shape-rendering="crispEdges"/><line x1="1005" y1="368.5" x2="1794" y2="368.5" stroke="#d9d9d9" stroke-width="1" shape-rendering="crispEdges"/><line x1="1005" y1="401.5" x2="1794" y2="401.5" stroke="#d9d9d9" stroke-width="1" shape-rendering="crispEdges"/><line x1="1005" y1="434.5" x2="1794" y2="434.5" stroke="#d9d9d9" stroke-width="1" shape-rendering="crispEdges"/><line x1="1005" y1="467.5" x2="1794" y2="467.5" stroke="#d9d9d9" stroke-width="1" shape-rendering="crispEdges"/><line x1="1005" y1="501.5" x2="1794" y2="501.5" stroke="#d9d9d9" stroke-width="1" shape-rendering="crispEdges"/><line x1="1005" y1="534.5" x2="1794" y2="534.5" stroke="#d9d9d9" stroke-width="1" shape-rendering="crispEdges"/><line x1="1005" y1="567.5" x2="1794" y2="567.5" stroke="#d9d9d9" stroke-width="1" shape-rendering="crispEdges"/><line x1="1005" y1="600.5" x2="1794" y2="600.5" stroke="#d9d9d9" stroke-width="1" shape-rendering="crispEdges"/><line x1="1005" y1="633.5" x2="1794" y2="633.5" stroke="#d9d9d9" stroke-width="1" shape-rendering="crispEdges"/><line x1="1005" y1="666.5" x2="1794" y2="666.5" stroke="#d9d9d9" stroke-width="1" shape-rendering="crispEdges"/><line x1="1005" y1="700.5" x2="1794" y2="700.5" stroke="#d9d9d9" stroke-width="1" shape-rendering="crispEdges"/><line x1="1005" y1="733.5" x2="1794" y2="733.5" stroke="#d9d9d9" stroke-width="1" shape-rendering="crispEdges"/><line x1="1005" y1="766.5" x2="1794" y2="766.5" stroke="#d9d9d9" stroke-width="1" shape-rendering="crispEdges"/><line x1="1034.5" y1="227" x2="1034.5" y2="768" stroke="#d9d9d9" stroke-width="1" shape-rendering="crispEdges"/><line x1="1111.5" y1="227" x2="1111.5" y2="768" stroke="#d9d9d9" stroke-width="1" shape-rendering="crispEdges"/><line x1="1187.5" y1="227" x2="1187.5" y2="768" stroke="#d9d9d9" stroke-width="1" shape-rendering="crispEdges"/><line x1="1263.5" y1="227" x2="1263.5" y2="768" stroke="#d9d9d9" stroke-width="1" shape-rendering="crispEdges"/><line x1="1340.5" y1="227" x2="1340.5" y2="768" stroke="#d9d9d9" stroke-width="1" shape-rendering="crispEdges"/><line x1="1416.5" y1="227" x2="1416.5" y2="768" stroke="#d9d9d9" stroke-width="1" shape-rendering="crispEdges"/><line x1="1492.5" y1="227" x2="1492.5" y2="768" stroke="#d9d9d9" stroke-width="1" shape-rendering="crispEdges"/><line x1="1569.5" y1="227" x2="1569.5" y2="768" stroke="#d9d9d9" stroke-width="1" shape-rendering="crispEdges"/><line x1="1645.5" y1="227" x2="1645.5" y2="768" stroke="#d9d9d9" stroke-width="1" shape-rendering="crispEdges"/><line x1="1721.5" y1="227" x2="1721.5" y2="768" stroke="#d9d9d9" stroke-width="1" shape-rendering="crispEdges"/><line x1="1005.5" y1="235" x2="1005.5" y2="768" stroke="#d9d9d9" stroke-width="1" shape-rendering="crispEdges"/><line x1="1793.5" y1="235" x2="1793.5" y2="768" stroke="#d9d9d9" stroke-width="1" shape-rendering="crispEdges"/><text x="0" y="0" transform="translate(1260,259) rotate(-90)" font-size="11" text-anchor="middle" fill="#5a92c8" font-family="Liberation Sans">6790.21</text><text x="0" y="0" transform="translate(1334,259) rotate(-90)" font-size="11" text-anchor="middle" fill="#9ec2e6" font-family="Liberation Sans">6838.45</text><text x="0" y="0" transform="translate(1467,259) rotate(-90)" font-size="11" text-anchor="middle" fill="#9ec2e6" font-family="Liberation Sans">6934.92</text><text x="0" y="0" transform="translate(1541,259) rotate(-90)" font-size="11" text-anchor="middle" fill="#5a92c8" font-family="Liberation Sans">6983.15</text><line x1="1181.4" y1="235" x2="1181.4" y2="768" stroke="#8a1a9c" stroke-width="1.4" stroke-dasharray="5 5" stroke-dashoffset="3"/><line x1="1620.5" y1="235" x2="1620.5" y2="768" stroke="#8a1a9c" stroke-width="1.4" stroke-dasharray="5 5" stroke-dashoffset="3"/><text transform="translate(1180.5,745) rotate(-90)" font-size="11" text-anchor="middle" fill="#8a1a9c" font-family="Liberation Sans">6746.06</text><text transform="translate(1619.5,745) rotate(-90)" font-size="11" text-anchor="middle" fill="#8a1a9c" font-family="Liberation Sans">7033.34</text><text x="1093" y="758" font-size="11" text-anchor="middle" fill="#8a1a9c" font-family="Liberation Sans">11.6%</text><text x="1399" y="758" font-size="11" text-anchor="middle" fill="#8a1a9c" font-family="Liberation Sans">74.6%</text><text x="1706" y="758" font-size="11" text-anchor="middle" fill="#8a1a9c" font-family="Liberation Sans">13.8%</text><line x1="1005" y1="335.5" x2="1793" y2="335.5" stroke="#000" stroke-width="1.3"/><path d="M1315.5 357.81L1317.5 356.71L1319.5 355.63L1321.5 354.57L1323.5 353.53L1325.5 352.51L1327.5 351.52L1329.5 350.54L1331.5 349.59L1333.5 348.66L1335.5 347.74L1337.5 346.86L1339.5 345.99L1341.5 345.14L1343.5 344.32L1345.5 343.52L1347.5 342.74L1349.5 341.99L1351.5 341.25L1353.5 340.54L1355.5 339.85L1357.5 339.18L1359.5 338.54L1361.5 337.92L1363.5 337.32L1365.5 336.74L1367.5 336.19L1369.5 335.66L1371.5 335.16L1373.5 334.67L1375.5 334.22L1377.5 333.78L1379.5 333.37L1381.5 332.98L1383.5 332.61L1385.5 332.27L1387.5 331.96L1389.5 331.66L1391.5 331.39L1393.5 331.15L1395.5 330.93L1397.5 330.73L1397.5 338.39L1395.5 338.66L1393.5 338.96L1391.5 339.28L1389.5 339.63L1387.5 340.00L1385.5 340.39L1383.5 340.81L1381.5 341.25L1379.5 341.71L1377.5 342.20L1375.5 342.72L1373.5 343.25L1371.5 343.81L1369.5 344.39L1367.5 345.00L1365.5 345.63L1363.5 346.28L1361.5 346.96L1359.5 347.65L1357.5 348.37L1355.5 349.12L1353.5 349.88L1351.5 350.67L1349.5 351.48L1347.5 352.32L1345.5 353.17L1343.5 354.05L1341.5 354.95L1339.5 355.87L1337.5 356.81L1335.5 357.78L1333.5 358.77L1331.5 359.77L1329.5 360.80L1327.5 361.86L1325.5 362.93L1323.5 364.02L1321.5 365.14L1319.5 366.28L1317.5 367.44L1315.5 368.61Z" fill="rgb(255,150,90)" fill-opacity="0.52"/><path d="M1005.0 743.18L1007.0 739.83L1009.0 736.47L1011.0 733.12L1013.0 729.78L1015.0 726.45L1017.0 723.12L1019.0 719.80L1021.0 716.48L1023.0 713.17L1025.0 709.87L1027.0 706.58L1029.0 703.29L1031.0 700.01L1033.0 696.74L1035.0 693.48L1037.0 690.22L1039.0 686.97L1041.0 683.73L1043.0 680.50L1045.0 677.28L1047.0 674.06L1049.0 670.85L1051.0 667.65L1053.0 664.47L1055.0 661.28L1057.0 658.11L1059.0 654.95L1061.0 651.80L1063.0 648.65L1065.0 645.52L1067.0 642.39L1069.0 639.28L1071.0 636.17L1073.0 633.08L1075.0 629.99L1077.0 626.92L1079.0 623.85L1081.0 620.80L1083.0 617.76L1085.0 614.72L1087.0 611.70L1089.0 608.69L1091.0 605.69L1093.0 602.70L1095.0 599.73L1097.0 596.76L1099.0 593.80L1101.0 590.86L1103.0 587.93L1105.0 585.01L1107.0 582.10L1109.0 579.21L1111.0 576.32L1113.0 573.45L1115.0 570.60L1117.0 567.75L1119.0 564.92L1121.0 562.09L1123.0 559.29L1125.0 556.49L1127.0 553.71L1129.0 550.94L1131.0 548.19L1133.0 545.44L1135.0 542.71L1137.0 540.00L1139.0 537.30L1141.0 534.61L1143.0 531.93L1145.0 529.27L1147.0 526.63L1149.0 524.00L1151.0 521.38L1153.0 518.77L1155.0 516.19L1157.0 513.61L1159.0 511.05L1161.0 508.51L1163.0 505.98L1165.0 503.46L1167.0 500.96L1169.0 498.47L1171.0 496.00L1173.0 493.55L1175.0 491.11L1177.0 488.68L1179.0 486.28L1181.0 483.88L1183.0 481.50L1185.0 479.14L1187.0 476.80L1189.0 474.47L1191.0 472.15L1193.0 469.86L1195.0 467.57L1197.0 465.31L1199.0 463.06L1201.0 460.83L1203.0 458.61L1205.0 456.41L1207.0 454.23L1209.0 452.06L1211.0 449.91L1213.0 447.78L1215.0 445.67L1217.0 443.57L1219.0 441.49L1221.0 439.43L1223.0 437.38L1225.0 435.35L1227.0 433.34L1229.0 431.35L1231.0 429.37L1233.0 427.41L1235.0 425.47L1237.0 423.55L1239.0 421.64L1241.0 419.76L1243.0 417.89L1245.0 416.04L1247.0 414.20L1249.0 412.39L1251.0 410.60L1253.0 408.82L1255.0 407.06L1257.0 405.32L1259.0 403.60L1261.0 401.90L1263.0 400.21L1265.0 398.55L1267.0 396.90L1269.0 395.28L1271.0 393.67L1273.0 392.08L1275.0 390.51L1277.0 388.96L1279.0 387.43L1281.0 385.92L1283.0 384.43L1285.0 382.96L1287.0 381.51L1289.0 380.08L1291.0 378.66L1293.0 377.27L1295.0 375.90L1297.0 374.55L1299.0 373.22L1301.0 371.91L1303.0 370.62L1305.0 369.35L1307.0 368.10L1309.0 366.87L1311.0 365.66L1313.0 364.47L1315.0 363.30L1317.0 362.16L1319.0 361.03L1321.0 359.93L1323.0 358.85L1325.0 357.78L1327.0 356.74L1329.0 355.72L1331.0 354.73L1333.0 353.75L1335.0 352.80L1337.0 351.86L1339.0 350.95L1341.0 350.06L1343.0 349.20L1345.0 348.35L1347.0 347.53L1349.0 346.73L1351.0 345.95L1353.0 345.20L1355.0 344.46L1357.0 343.75L1359.0 343.06L1361.0 342.40L1363.0 341.76L1365.0 341.14L1367.0 340.54L1369.0 339.97L1371.0 339.42L1373.0 338.89L1375.0 338.39L1377.0 337.91L1379.0 337.45L1381.0 337.02L1383.0 336.61L1385.0 336.22L1387.0 335.86L1389.0 335.53L1391.0 335.21L1393.0 334.92L1395.0 334.66L1397.0 334.42L1399.0 334.20L1401.0 334.01L1403.0 333.84L1405.0 333.70L1407.0 333.58L1409.0 333.49L1411.0 333.42L1413.0 333.38L1415.0 333.35L1417.0 333.36L1419.0 333.39L1421.0 333.44L1423.0 333.51L1425.0 333.61L1427.0 333.74L1429.0 333.89L1431.0 334.06L1433.0 334.25L1435.0 334.47L1437.0 334.72L1439.0 334.98L1441.0 335.27L1443.0 335.59L1445.0 335.93L1447.0 336.29L1449.0 336.68L1451.0 337.08L1453.0 337.52L1455.0 337.97L1457.0 338.45L1459.0 338.95L1461.0 339.48L1463.0 340.03L1465.0 340.60L1467.0 341.20L1469.0 341.82L1471.0 342.46L1473.0 343.12L1475.0 343.81L1477.0 344.52L1479.0 345.25L1481.0 346.01L1483.0 346.78L1485.0 347.58L1487.0 348.41L1489.0 349.25L1491.0 350.12L1493.0 351.01L1495.0 351.92L1497.0 352.86L1499.0 353.82L1501.0 354.80L1503.0 355.80L1505.0 356.82L1507.0 357.87L1509.0 358.94L1511.0 360.04L1513.0 361.16L1515.0 362.30L1517.0 363.46L1519.0 364.65L1521.0 365.87L1523.0 367.10L1525.0 368.36L1527.0 369.65L1529.0 370.96L1531.0 372.29L1533.0 373.65L1535.0 375.03L1537.0 376.44L1539.0 377.87L1541.0 379.33L1543.0 380.81L1545.0 382.32L1547.0 383.85L1549.0 385.41L1551.0 386.99L1553.0 388.60L1555.0 390.23L1557.0 391.89L1559.0 393.58L1561.0 395.29L1563.0 397.02L1565.0 398.79L1567.0 400.57L1569.0 402.39L1571.0 404.23L1573.0 406.09L1575.0 407.98L1577.0 409.90L1579.0 411.84L1581.0 413.81L1583.0 415.81L1585.0 417.83L1587.0 419.87L1589.0 421.94L1591.0 424.04L1593.0 426.16L1595.0 428.31L1597.0 430.48L1599.0 432.67L1601.0 434.90L1603.0 437.14L1605.0 439.41L1607.0 441.71L1609.0 444.03L1611.0 446.37L1613.0 448.74L1615.0 451.13L1617.0 453.54L1619.0 455.98L1621.0 458.45L1623.0 460.93L1625.0 463.44L1627.0 465.98L1629.0 468.55L1631.0 471.14L1633.0 473.76L1635.0 476.41L1637.0 479.09L1639.0 481.81L1641.0 484.55L1643.0 487.33L1645.0 490.15L1647.0 493.00L1649.0 495.88L1651.0 498.81L1653.0 501.77L1655.0 504.77L1657.0 507.81L1659.0 510.89L1661.0 514.01L1663.0 517.15L1665.0 520.34L1667.0 523.55L1669.0 526.80L1671.0 530.07L1673.0 533.37L1675.0 536.70L1677.0 540.05L1679.0 543.42L1681.0 546.81L1683.0 550.23L1685.0 553.66L1687.0 557.11L1689.0 560.57L1691.0 564.05L1693.0 567.54L1695.0 571.04L1697.0 574.55L1699.0 578.06L1701.0 581.58L1703.0 585.11L1705.0 588.64L1707.0 592.17L1709.0 595.70L1711.0 599.23L1713.0 602.76L1715.0 606.29L1717.0 609.81L1719.0 613.33L1721.0 616.86L1723.0 620.38L1725.0 623.90L1727.0 627.43L1729.0 630.96L1731.0 634.49L1733.0 638.02L1735.0 641.56L1737.0 645.10L1739.0 648.65L1741.0 652.21L1743.0 655.77L1745.0 659.33L1747.0 662.91L1749.0 666.50L1751.0 670.09L1753.0 673.69L1755.0 677.31L1757.0 680.93L1759.0 684.57L1761.0 688.22L1763.0 691.88L1765.0 695.56L1767.0 699.25L1769.0 702.95L1771.0 706.67L1773.0 710.41L1775.0 714.16L1777.0 717.93L1779.0 721.72L1781.0 725.53L1783.0 729.36L1785.0 733.20L1787.0 737.07L1789.0 740.96L1791.0 744.87L1793.0 748.80" stroke="#6a9ef2" stroke-width="1.2" fill="none"/><path d="M1005.0 721.75L1007.0 717.61L1009.0 713.49L1011.0 709.38L1013.0 705.30L1015.0 701.23L1017.0 697.18L1019.0 693.15L1021.0 689.14L1023.0 685.15L1025.0 681.17L1027.0 677.22L1029.0 673.28L1031.0 669.36L1033.0 665.46L1035.0 661.57L1037.0 657.71L1039.0 653.86L1041.0 650.04L1043.0 646.23L1045.0 642.44L1047.0 638.67L1049.0 634.91L1051.0 631.18L1053.0 627.46L1055.0 623.77L1057.0 620.09L1059.0 616.43L1061.0 612.79L1063.0 609.17L1065.0 605.57L1067.0 601.99L1069.0 598.43L1071.0 594.88L1073.0 591.36L1075.0 587.85L1077.0 584.37L1079.0 580.90L1081.0 577.46L1083.0 574.03L1085.0 570.62L1087.0 567.23L1089.0 563.86L1091.0 560.51L1093.0 557.18L1095.0 553.87L1097.0 550.58L1099.0 547.31L1101.0 544.06L1103.0 540.83L1105.0 537.62L1107.0 534.43L1109.0 531.26L1111.0 528.10L1113.0 524.97L1115.0 521.86L1117.0 518.77L1119.0 515.70L1121.0 512.65L1123.0 509.61L1125.0 506.60L1127.0 503.61L1129.0 500.64L1131.0 497.69L1133.0 494.75L1135.0 491.84L1137.0 488.95L1139.0 486.08L1141.0 483.23L1143.0 480.40L1145.0 477.58L1147.0 474.79L1149.0 472.02L1151.0 469.27L1153.0 466.54L1155.0 463.83L1157.0 461.13L1159.0 458.46L1161.0 455.81L1163.0 453.18L1165.0 450.56L1167.0 447.97L1169.0 445.40L1171.0 442.84L1173.0 440.31L1175.0 437.79L1177.0 435.30L1179.0 432.82L1181.0 430.36L1183.0 427.92L1185.0 425.51L1187.0 423.11L1189.0 420.73L1191.0 418.37L1193.0 416.03L1195.0 413.71L1197.0 411.41L1199.0 409.13L1201.0 406.87L1203.0 404.63L1205.0 402.42L1207.0 400.22L1209.0 398.04L1211.0 395.88L1213.0 393.75L1215.0 391.63L1217.0 389.53L1219.0 387.46L1221.0 385.41L1223.0 383.37L1225.0 381.36L1227.0 379.37L1229.0 377.40L1231.0 375.45L1233.0 373.52L1235.0 371.61L1237.0 369.72L1239.0 367.85L1241.0 366.01L1243.0 364.18L1245.0 362.37L1247.0 360.59L1249.0 358.83L1251.0 357.09L1253.0 355.36L1255.0 353.66L1257.0 351.98L1259.0 350.32L1261.0 348.69L1263.0 347.07L1265.0 345.47L1267.0 343.89L1269.0 342.34L1271.0 340.80L1273.0 339.29L1275.0 337.79L1277.0 336.32L1279.0 334.87L1281.0 333.43L1283.0 332.02L1285.0 330.63L1287.0 329.26L1289.0 327.90L1291.0 326.57L1293.0 325.26L1295.0 323.97L1297.0 322.70L1299.0 321.45L1301.0 320.21L1303.0 319.00L1305.0 317.81L1307.0 316.64L1309.0 315.49L1311.0 314.35L1313.0 313.24L1315.0 312.15L1317.0 311.07L1319.0 310.02L1321.0 308.99L1323.0 307.97L1325.0 306.98L1327.0 306.00L1329.0 305.04L1331.0 304.10L1333.0 303.19L1335.0 302.29L1337.0 301.41L1339.0 300.55L1341.0 299.71L1343.0 298.88L1345.0 298.08L1347.0 297.30L1349.0 296.53L1351.0 295.78L1353.0 295.06L1355.0 294.35L1357.0 293.66L1359.0 292.99L1361.0 292.34L1363.0 291.71L1365.0 291.09L1367.0 290.50L1369.0 289.92L1371.0 289.37L1373.0 288.83L1375.0 288.31L1377.0 287.81L1379.0 287.34L1381.0 286.87L1383.0 286.43L1385.0 286.01L1387.0 285.61L1389.0 285.23L1391.0 284.86L1393.0 284.52L1395.0 284.19L1397.0 283.89L1399.0 283.60L1401.0 283.34L1403.0 283.09L1405.0 282.87L1407.0 282.66L1409.0 282.48L1411.0 282.31L1413.0 282.17L1415.0 282.04L1417.0 281.94L1419.0 281.86L1421.0 281.79L1423.0 281.75L1425.0 281.73L1427.0 281.73L1429.0 281.76L1431.0 281.80L1433.0 281.87L1435.0 281.95L1437.0 282.06L1439.0 282.19L1441.0 282.35L1443.0 282.52L1445.0 282.72L1447.0 282.94L1449.0 283.19L1451.0 283.45L1453.0 283.74L1455.0 284.06L1457.0 284.40L1459.0 284.76L1461.0 285.14L1463.0 285.55L1465.0 285.98L1467.0 286.44L1469.0 286.93L1471.0 287.43L1473.0 287.97L1475.0 288.52L1477.0 289.11L1479.0 289.72L1481.0 290.35L1483.0 291.01L1485.0 291.70L1487.0 292.41L1489.0 293.15L1491.0 293.92L1493.0 294.72L1495.0 295.54L1497.0 296.39L1499.0 297.26L1501.0 298.17L1503.0 299.10L1505.0 300.06L1507.0 301.05L1509.0 302.07L1511.0 303.11L1513.0 304.19L1515.0 305.29L1517.0 306.43L1519.0 307.59L1521.0 308.78L1523.0 310.01L1525.0 311.26L1527.0 312.54L1529.0 313.85L1531.0 315.19L1533.0 316.57L1535.0 317.97L1537.0 319.41L1539.0 320.87L1541.0 322.37L1543.0 323.90L1545.0 325.45L1547.0 327.04L1549.0 328.66L1551.0 330.32L1553.0 332.00L1555.0 333.72L1557.0 335.47L1559.0 337.25L1561.0 339.06L1563.0 340.90L1565.0 342.78L1567.0 344.69L1569.0 346.63L1571.0 348.60L1573.0 350.61L1575.0 352.65L1577.0 354.72L1579.0 356.83L1581.0 358.96L1583.0 361.13L1585.0 363.34L1587.0 365.57L1589.0 367.84L1591.0 370.14L1593.0 372.48L1595.0 374.84L1597.0 377.24L1599.0 379.68L1601.0 382.14L1603.0 384.64L1605.0 387.17L1607.0 389.74L1609.0 392.33L1611.0 394.96L1613.0 397.63L1615.0 400.32L1617.0 403.05L1619.0 405.81L1621.0 408.60L1623.0 411.42L1625.0 414.28L1627.0 417.16L1629.0 420.08L1631.0 423.03L1633.0 426.01L1635.0 429.03L1637.0 432.07L1639.0 435.15L1641.0 438.25L1643.0 441.39L1645.0 444.56L1647.0 447.75L1649.0 450.98L1651.0 454.24L1653.0 457.53L1655.0 460.85L1657.0 464.20L1659.0 467.57L1661.0 470.98L1663.0 474.41L1665.0 477.88L1667.0 481.37L1669.0 484.89L1671.0 488.44L1673.0 492.02L1675.0 495.62L1677.0 499.25L1679.0 502.91L1681.0 506.60L1683.0 510.31L1685.0 514.05L1687.0 517.82L1689.0 521.61L1691.0 525.43L1693.0 529.27L1695.0 533.14L1697.0 537.04L1699.0 540.96L1701.0 544.90L1703.0 548.86L1705.0 552.85L1707.0 556.85L1709.0 560.87L1711.0 564.90L1713.0 568.95L1715.0 573.01L1717.0 577.09L1719.0 581.17L1721.0 585.26L1723.0 589.36L1725.0 593.46L1727.0 597.57L1729.0 601.68L1731.0 605.79L1733.0 609.90L1735.0 614.01L1737.0 618.11L1739.0 622.21L1741.0 626.31L1743.0 630.39L1745.0 634.47L1747.0 638.54L1749.0 642.60L1751.0 646.64L1753.0 650.67L1755.0 654.68L1757.0 658.67L1759.0 662.65L1761.0 666.60L1763.0 670.54L1765.0 674.45L1767.0 678.33L1769.0 682.19L1771.0 686.02L1773.0 689.83L1775.0 693.60L1777.0 697.34L1779.0 701.05L1781.0 704.73L1783.0 708.37L1785.0 711.97L1787.0 715.54L1789.0 719.06L1791.0 722.55L1793.0 725.99" stroke="#f04444" stroke-width="1.3" fill="none"/><path d="M1005.0 719.5L1217.6 257.5L1584.1 257.5L1793.0 711.5" stroke="#3b3db6" stroke-width="2.6" fill="none" stroke-linejoin="round"/><circle cx="1399.3" cy="335.5" r="4.3" fill="#ff0000" stroke="#000" stroke-width="1"/></svg>
<div style="left:1004.5px;top:218.5px;width:60px;text-align:center;color:#222;font-size:11px;line-height:14px;white-space:nowrap;">-3.4%</div>
<div style="left:1081.5px;top:218.5px;width:60px;text-align:center;color:#222;font-size:11px;line-height:14px;white-space:nowrap;">-2.7%</div>
<div style="left:1157.5px;top:218.5px;width:60px;text-align:center;color:#222;font-size:11px;line-height:14px;white-space:nowrap;">-2.0%</div>
<div style="left:1233.5px;top:218.5px;width:60px;text-align:center;color:#222;font-size:11px;line-height:14px;white-space:nowrap;">-1.3%</div>
<div style="left:1310.5px;top:218.5px;width:60px;text-align:center;color:#222;font-size:11px;line-height:14px;white-space:nowrap;">-0.5%</div>
<div style="left:1386.5px;top:218.5px;width:60px;text-align:center;color:#222;font-size:11px;line-height:14px;white-space:nowrap;">0.2%</div>
<div style="left:1462.5px;top:218.5px;width:60px;text-align:center;color:#222;font-size:11px;line-height:14px;white-space:nowrap;">0.9%</div>
<div style="left:1539.5px;top:218.5px;width:60px;text-align:center;color:#222;font-size:11px;line-height:14px;white-space:nowrap;">1.6%</div>
<div style="left:1615.5px;top:218.5px;width:60px;text-align:center;color:#222;font-size:11px;line-height:14px;white-space:nowrap;">2.4%</div>
<div style="left:1691.5px;top:218.5px;width:60px;text-align:center;color:#222;font-size:11px;line-height:14px;white-space:nowrap;">3.1%</div>
<div style="left:1004.5px;top:772.5px;width:60px;text-align:center;color:#222;font-size:11px;line-height:14px;white-space:nowrap;">6650</div>
<div style="left:1081.5px;top:772.5px;width:60px;text-align:center;color:#222;font-size:11px;line-height:14px;white-space:nowrap;">6700</div>
<div style="left:1157.5px;top:772.5px;width:60px;text-align:center;color:#222;font-size:11px;line-height:14px;white-space:nowrap;">6750</div>
<div style="left:1233.5px;top:772.5px;width:60px;text-align:center;color:#222;font-size:11px;line-height:14px;white-space:nowrap;">6800</div>
<div style="left:1310.5px;top:772.5px;width:60px;text-align:center;color:#222;font-size:11px;line-height:14px;white-space:nowrap;">6850</div>
<div style="left:1462.5px;top:772.5px;width:60px;text-align:center;color:#222;font-size:11px;line-height:14px;white-space:nowrap;">6950</div>
<div style="left:1539.5px;top:772.5px;width:60px;text-align:center;color:#222;font-size:11px;line-height:14px;white-space:nowrap;">7000</div>
<div style="left:1615.5px;top:772.5px;width:60px;text-align:center;color:#222;font-size:11px;line-height:14px;white-space:nowrap;">7050</div>
<div style="left:1691.5px;top:772.5px;width:60px;text-align:center;color:#222;font-size:11px;line-height:14px;white-space:nowrap;">7100</div>
<div style="left:949px;top:230.0px;width:50px;text-align:right;color:#222;font-size:11px;line-height:14px;white-space:nowrap;">2%</div>
<div style="left:1801px;top:230.0px;color:#222;font-size:11px;line-height:14px;white-space:nowrap;">3,000</div>
<div style="left:949px;top:263.0px;width:50px;text-align:right;color:#222;font-size:11px;line-height:14px;white-space:nowrap;">2%</div>
<div style="left:1801px;top:263.0px;color:#222;font-size:11px;line-height:14px;white-space:nowrap;">2,000</div>
<div style="left:949px;top:296.0px;width:50px;text-align:right;color:#222;font-size:11px;line-height:14px;white-space:nowrap;">1%</div>
<div style="left:1801px;top:296.0px;color:#222;font-size:11px;line-height:14px;white-space:nowrap;">1,000</div>
<div style="left:949px;top:363.0px;width:50px;text-align:right;color:#222;font-size:11px;line-height:14px;white-space:nowrap;">-1%</div>
<div style="left:1801px;top:363.0px;color:#222;font-size:11px;line-height:14px;white-space:nowrap;">-1,000</div>
<div style="left:949px;top:396.0px;width:50px;text-align:right;color:#222;font-size:11px;line-height:14px;white-space:nowrap;">-2%</div>
<div style="left:1801px;top:396.0px;color:#222;font-size:11px;line-height:14px;white-space:nowrap;">-2,000</div>
<div style="left:949px;top:429.0px;width:50px;text-align:right;color:#222;font-size:11px;line-height:14px;white-space:nowrap;">-2%</div>
<div style="left:1801px;top:429.0px;color:#222;font-size:11px;line-height:14px;white-space:nowrap;">-3,000</div>
<div style="left:949px;top:462.0px;width:50px;text-align:right;color:#222;font-size:11px;line-height:14px;white-space:nowrap;">-3%</div>
<div style="left:1801px;top:462.0px;color:#222;font-size:11px;line-height:14px;white-space:nowrap;">-4,000</div>
<div style="left:949px;top:496.0px;width:50px;text-align:right;color:#222;font-size:11px;line-height:14px;white-space:nowrap;">-4%</div>
<div style="left:1801px;top:496.0px;color:#222;font-size:11px;line-height:14px;white-space:nowrap;">-5,000</div>
<div style="left:949px;top:529.0px;width:50px;text-align:right;color:#222;font-size:11px;line-height:14px;white-space:nowrap;">-5%</div>
<div style="left:1801px;top:529.0px;color:#222;font-size:11px;line-height:14px;white-space:nowrap;">-6,000</div>
<div style="left:949px;top:562.0px;width:50px;text-align:right;color:#222;font-size:11px;line-height:14px;white-space:nowrap;">-6%</div>
<div style="left:1801px;top:562.0px;color:#222;font-size:11px;line-height:14px;white-space:nowrap;">-7,000</div>
<div style="left:949px;top:595.0px;width:50px;text-align:right;color:#222;font-size:11px;line-height:14px;white-space:nowrap;">-6%</div>
<div style="left:1801px;top:595.0px;color:#222;font-size:11px;line-height:14px;white-space:nowrap;">-8,000</div>
<div style="left:949px;top:628.0px;width:50px;text-align:right;color:#222;font-size:11px;line-height:14px;white-space:nowrap;">-7%</div>
<div style="left:1801px;top:628.0px;color:#222;font-size:11px;line-height:14px;white-space:nowrap;">-9,000</div>
<div style="left:949px;top:661.0px;width:50px;text-align:right;color:#222;font-size:11px;line-height:14px;white-space:nowrap;">-8%</div>
<div style="left:1801px;top:661.0px;color:#222;font-size:11px;line-height:14px;white-space:nowrap;">-10,000</div>
<div style="left:949px;top:695.0px;width:50px;text-align:right;color:#222;font-size:11px;line-height:14px;white-space:nowrap;">-9%</div>
<div style="left:1801px;top:695.0px;color:#222;font-size:11px;line-height:14px;white-space:nowrap;">-11,000</div>
<div style="left:949px;top:728.0px;width:50px;text-align:right;color:#222;font-size:11px;line-height:14px;white-space:nowrap;">-10%</div>
<div style="left:1801px;top:728.0px;color:#222;font-size:11px;line-height:14px;white-space:nowrap;">-12,000</div>
<div style="left:949px;top:761.0px;width:50px;text-align:right;color:#222;font-size:11px;line-height:14px;white-space:nowrap;">-10%</div>
<div style="left:1801px;top:761.0px;color:#222;font-size:11px;line-height:14px;white-space:nowrap;">-13,000</div>
<div style="left:956px;top:328px;width:45px;height:14px;background:#cc0000;"></div>
<div style="left:958px;top:328.5px;width:40px;text-align:right;color:#fff;font-size:11px;line-height:14px;white-space:nowrap;">0%</div>
<div style="left:1798px;top:328px;width:47px;height:14px;background:#cc0000;"></div>
<div style="left:1802px;top:328.5px;color:#fff;font-size:11px;line-height:14px;white-space:nowrap;">-6</div>
<div style="left:1384px;top:217px;width:30px;height:15px;background:#eef2f8;border:1px solid #3a4a60;box-sizing:border-box"></div>
<div style="left:1380.0px;top:218.0px;width:40px;text-align:center;color:#222;font-size:11px;line-height:14px;white-space:nowrap;">0.0%</div>
<div style="left:1010px;top:240px;width:168px;height:57px;background:rgba(238,242,248,0.93);border:1px solid #5a6a80;border-radius:5px;box-sizing:border-box"></div>
<div style="left:1018px;top:248px;width:4px;height:14px;background:#f04040;"></div>
<div style="left:1018px;top:263px;width:4px;height:13px;background:#8ab0f0;"></div>
<div style="left:1018px;top:277px;width:4px;height:13px;background:#8ab0f0;"></div>
<div style="left:1021px;top:248.5px;color:#555;font-size:11px;line-height:14px;white-space:nowrap;letter-spacing:0.25px">-1.40 Realized PnL</div>
<div style="left:1021px;top:262.7px;color:#555;font-size:11px;line-height:14px;white-space:nowrap;letter-spacing:0.2px">-1 <span style="color:#f04848">19dic. 7010 Call Δ</span></div>
<div style="left:1021px;top:276.9px;color:#555;font-size:11px;line-height:14px;white-space:nowrap;letter-spacing:0.2px">-1 <span style="color:#f04848">19dic. 6770 Put Δ</span></div>
<div style="left:1119px;top:262.7px;width:50px;text-align:right;color:#f04848;font-size:11px;line-height:14px;white-space:nowrap;">14.31</div>
<div style="left:1116px;top:276.9px;width:50px;text-align:right;color:#f04848;font-size:11px;line-height:14px;white-space:nowrap;">-19.24</div>
<div style="left:1654px;top:240px;width:137px;height:46px;background:rgba(238,242,248,0.93);border:1px solid #5a6a80;border-radius:5px;box-sizing:border-box"></div>
<div style="left:1666px;top:246.5px;color:#4a4a4a;font-size:11px;line-height:14px;white-space:nowrap;font-weight:bold;letter-spacing:0.2px">Comments</div>
<div style="left:1666px;top:265.5px;color:#4a4a4a;font-size:11px;line-height:14px;white-space:nowrap;letter-spacing:0.4px">Trade Occurred Today</div>
<div style="left:1010px;top:705px;width:110px;height:57px;background:rgba(238,242,248,0.93);border:1px solid #5a6a80;border-radius:5px;box-sizing:border-box"></div>
<div style="left:1018px;top:713.5px;color:#7878e0;font-size:11px;line-height:14px;white-space:nowrap;">19/12/2025 (0)</div>
<div style="left:1018px;top:727.5px;color:#f06060;font-size:11px;line-height:14px;white-space:nowrap;">15/12/2025 (4) T+4</div>
<div style="left:1018px;top:741.5px;color:#90b4f0;font-size:11px;line-height:14px;white-space:nowrap;">11/12/2025 (8) T+0</div>
<div style="left:1073.0px;top:747.5px;width:40px;text-align:center;color:#8a1a9c;font-size:11px;line-height:14px;white-space:nowrap;">11.6%</div>
<div style="left:954px;top:787px;width:890px;height:185px;background:#e8eef7;border:1px solid #4a5a70;border-radius:7px;box-sizing:border-box"></div>
<svg style="left:950px;top:780px" width="899" height="196" viewBox="950 780 899 196"><line x1="1006" y1="815.4" x2="1795" y2="815.4" stroke="#555" stroke-width="1"/><rect x="1006.5" y="815.4" width="67.6" height="9.6" fill="#f47878" stroke="#555" stroke-width="1"/><rect x="1074.1" y="815.4" width="76.9" height="6.4" fill="#f47878" stroke="#555" stroke-width="1"/><rect x="1151.0" y="815.4" width="76.2" height="3.7" fill="#f47878" stroke="#555" stroke-width="1"/><rect x="1227.2" y="815.4" width="75.8" height="1.7" fill="#f47878" stroke="#555" stroke-width="1"/><rect x="1532.0" y="815.4" width="77.2" height="1.9" fill="#f47878" stroke="#555" stroke-width="1"/><rect x="1609.2" y="815.4" width="75.8" height="4.3" fill="#f47878" stroke="#555" stroke-width="1"/><rect x="1685.0" y="815.4" width="110.5" height="7.6" fill="#f47878" stroke="#555" stroke-width="1"/><line x1="1006" y1="857.4" x2="1795" y2="857.4" stroke="#555" stroke-width="1"/><rect x="1006.5" y="847.6" width="67.6" height="9.8" fill="#5a7af2" stroke="#555" stroke-width="1"/><rect x="1074.1" y="849.0" width="76.9" height="8.4" fill="#5a7af2" stroke="#555" stroke-width="1"/><rect x="1151.0" y="850.8" width="76.2" height="6.6" fill="#5a7af2" stroke="#555" stroke-width="1"/><rect x="1227.2" y="852.7" width="75.8" height="4.7" fill="#5a7af2" stroke="#555" stroke-width="1"/><rect x="1303.0" y="854.9" width="76.5" height="2.5" fill="#5a7af2" stroke="#555" stroke-width="1"/><rect x="1456.0" y="857.4" width="76.0" height="2.7" fill="#f47878" stroke="#555" stroke-width="1"/><rect x="1532.0" y="857.4" width="77.2" height="5.5" fill="#f47878" stroke="#555" stroke-width="1"/><rect x="1609.2" y="857.4" width="75.8" height="8.1" fill="#f47878" stroke="#555" stroke-width="1"/><rect x="1685.0" y="857.4" width="110.5" height="10.2" fill="#f47878" stroke="#555" stroke-width="1"/><line x1="1006" y1="889.7" x2="1795" y2="889.7" stroke="#555" stroke-width="1"/><rect x="1006.5" y="889.7" width="67.6" height="4.6" fill="#f47878" stroke="#555" stroke-width="1"/><rect x="1074.1" y="889.7" width="76.9" height="5.7" fill="#f47878" stroke="#555" stroke-width="1"/><rect x="1151.0" y="889.7" width="76.2" height="6.5" fill="#f47878" stroke="#555" stroke-width="1"/><rect x="1227.2" y="889.7" width="75.8" height="7.0" fill="#f47878" stroke="#555" stroke-width="1"/><rect x="1303.0" y="889.7" width="76.5" height="7.8" fill="#f47878" stroke="#555" stroke-width="1"/><rect x="1379.5" y="889.7" width="76.5" height="8.9" fill="#f47878" stroke="#555" stroke-width="1"/><rect x="1456.0" y="889.7" width="76.0" height="9.8" fill="#f47878" stroke="#555" stroke-width="1"/><rect x="1532.0" y="889.7" width="77.2" height="9.8" fill="#f47878" stroke="#555" stroke-width="1"/><rect x="1609.2" y="889.7" width="75.8" height="8.3" fill="#f47878" stroke="#555" stroke-width="1"/><rect x="1685.0" y="889.7" width="110.5" height="5.7" fill="#f47878" stroke="#555" stroke-width="1"/><line x1="1006" y1="921.3" x2="1795" y2="921.3" stroke="#555" stroke-width="1"/><rect x="1006.5" y="916.6" width="67.6" height="4.7" fill="#5a7af2" stroke="#555" stroke-width="1"/><rect x="1074.1" y="914.7" width="76.9" height="6.6" fill="#5a7af2" stroke="#555" stroke-width="1"/><rect x="1151.0" y="913.4" width="76.2" height="7.9" fill="#5a7af2" stroke="#555" stroke-width="1"/><rect x="1227.2" y="912.7" width="75.8" height="8.6" fill="#5a7af2" stroke="#555" stroke-width="1"/><rect x="1303.0" y="912.2" width="76.5" height="9.1" fill="#5a7af2" stroke="#555" stroke-width="1"/><rect x="1379.5" y="911.7" width="76.5" height="9.6" fill="#5a7af2" stroke="#555" stroke-width="1"/><rect x="1456.0" y="911.4" width="76.0" height="9.9" fill="#5a7af2" stroke="#555" stroke-width="1"/><rect x="1532.0" y="911.6" width="77.2" height="9.7" fill="#5a7af2" stroke="#555" stroke-width="1"/><rect x="1609.2" y="912.8" width="75.8" height="8.5" fill="#5a7af2" stroke="#555" stroke-width="1"/><rect x="1685.0" y="914.7" width="110.5" height="6.6" fill="#5a7af2" stroke="#555" stroke-width="1"/><line x1="1006" y1="953.7" x2="1795" y2="953.7" stroke="#555" stroke-width="1"/><rect x="1006.5" y="953.7" width="67.6" height="5.1" fill="#f47878" stroke="#555" stroke-width="1"/><rect x="1074.1" y="953.7" width="76.9" height="6.4" fill="#f47878" stroke="#555" stroke-width="1"/><rect x="1151.0" y="953.7" width="76.2" height="7.3" fill="#f47878" stroke="#555" stroke-width="1"/><rect x="1227.2" y="953.7" width="75.8" height="7.9" fill="#f47878" stroke="#555" stroke-width="1"/><rect x="1303.0" y="953.7" width="76.5" height="8.4" fill="#f47878" stroke="#555" stroke-width="1"/><rect x="1379.5" y="953.7" width="76.5" height="9.1" fill="#f47878" stroke="#555" stroke-width="1"/><rect x="1456.0" y="953.7" width="76.0" height="9.5" fill="#f47878" stroke="#555" stroke-width="1"/><rect x="1532.0" y="953.7" width="77.2" height="9.2" fill="#f47878" stroke="#555" stroke-width="1"/><rect x="1609.2" y="953.7" width="75.8" height="7.7" fill="#f47878" stroke="#555" stroke-width="1"/><rect x="1685.0" y="953.7" width="110.5" height="5.4" fill="#f47878" stroke="#555" stroke-width="1"/></svg>
<div style="left:1000.5999999999999px;top:803.8px;width:70px;text-align:center;color:#f06868;font-size:11px;line-height:14px;white-space:nowrap;">-10759</div>
<div style="left:1000.5999999999999px;top:793.0999999999999px;width:70px;text-align:center;color:#f06868;font-size:11px;line-height:14px;white-space:nowrap;">-9%</div>
<div style="left:1077.0px;top:803.8px;width:70px;text-align:center;color:#f06868;font-size:11px;line-height:14px;white-space:nowrap;">-7138</div>
<div style="left:1077.0px;top:793.0999999999999px;width:70px;text-align:center;color:#f06868;font-size:11px;line-height:14px;white-space:nowrap;">-6%</div>
<div style="left:1153.0px;top:803.8px;width:70px;text-align:center;color:#f06868;font-size:11px;line-height:14px;white-space:nowrap;">-4161</div>
<div style="left:1153.0px;top:793.0999999999999px;width:70px;text-align:center;color:#f06868;font-size:11px;line-height:14px;white-space:nowrap;">-3%</div>
<div style="left:1229.5px;top:803.8px;width:70px;text-align:center;color:#f06868;font-size:11px;line-height:14px;white-space:nowrap;">-1922</div>
<div style="left:1229.5px;top:793.0999999999999px;width:70px;text-align:center;color:#f06868;font-size:11px;line-height:14px;white-space:nowrap;">-2%</div>
<div style="left:1306.5px;top:803.8px;width:70px;text-align:center;color:#f06868;font-size:11px;line-height:14px;white-space:nowrap;">-496</div>
<div style="left:1306.5px;top:793.0999999999999px;width:70px;text-align:center;color:#f06868;font-size:11px;line-height:14px;white-space:nowrap;">0%</div>
<div style="left:1458.0px;top:803.8px;width:70px;text-align:center;color:#f06868;font-size:11px;line-height:14px;white-space:nowrap;">-482</div>
<div style="left:1458.0px;top:793.0999999999999px;width:70px;text-align:center;color:#f06868;font-size:11px;line-height:14px;white-space:nowrap;">0%</div>
<div style="left:1534.5px;top:803.8px;width:70px;text-align:center;color:#f06868;font-size:11px;line-height:14px;white-space:nowrap;">-2106</div>
<div style="left:1534.5px;top:793.0999999999999px;width:70px;text-align:center;color:#f06868;font-size:11px;line-height:14px;white-space:nowrap;">-2%</div>
<div style="left:1611.0px;top:803.8px;width:70px;text-align:center;color:#f06868;font-size:11px;line-height:14px;white-space:nowrap;">-4830</div>
<div style="left:1611.0px;top:793.0999999999999px;width:70px;text-align:center;color:#f06868;font-size:11px;line-height:14px;white-space:nowrap;">-4%</div>
<div style="left:1687.5px;top:803.8px;width:70px;text-align:center;color:#f06868;font-size:11px;line-height:14px;white-space:nowrap;">-8484</div>
<div style="left:1687.5px;top:793.0999999999999px;width:70px;text-align:center;color:#f06868;font-size:11px;line-height:14px;white-space:nowrap;">-7%</div>
<div style="left:1000.5999999999999px;top:857.0999999999999px;width:70px;text-align:center;color:#5a74ee;font-size:11px;line-height:14px;white-space:nowrap;">78.07</div>
<div style="left:1077.0px;top:857.0999999999999px;width:70px;text-align:center;color:#5a74ee;font-size:11px;line-height:14px;white-space:nowrap;">66.34</div>
<div style="left:1153.0px;top:857.0999999999999px;width:70px;text-align:center;color:#5a74ee;font-size:11px;line-height:14px;white-space:nowrap;">52.42</div>
<div style="left:1229.5px;top:857.0999999999999px;width:70px;text-align:center;color:#5a74ee;font-size:11px;line-height:14px;white-space:nowrap;">36.91</div>
<div style="left:1306.5px;top:857.0999999999999px;width:70px;text-align:center;color:#5a74ee;font-size:11px;line-height:14px;white-space:nowrap;">19.82</div>
<div style="left:1458.0px;top:845.8px;width:70px;text-align:center;color:#f06868;font-size:11px;line-height:14px;white-space:nowrap;">-21.11</div>
<div style="left:1534.5px;top:845.8px;width:70px;text-align:center;color:#f06868;font-size:11px;line-height:14px;white-space:nowrap;">-43.80</div>
<div style="left:1611.0px;top:845.8px;width:70px;text-align:center;color:#f06868;font-size:11px;line-height:14px;white-space:nowrap;">-64.58</div>
<div style="left:1687.5px;top:845.8px;width:70px;text-align:center;color:#f06868;font-size:11px;line-height:14px;white-space:nowrap;">-80.65</div>
<div style="left:1000.5999999999999px;top:878.0px;width:70px;text-align:center;color:#f06868;font-size:11px;line-height:14px;white-space:nowrap;">-0.21</div>
<div style="left:1077.0px;top:878.0px;width:70px;text-align:center;color:#f06868;font-size:11px;line-height:14px;white-space:nowrap;">-0.26</div>
<div style="left:1153.0px;top:878.0px;width:70px;text-align:center;color:#f06868;font-size:11px;line-height:14px;white-space:nowrap;">-0.30</div>
<div style="left:1229.5px;top:878.0px;width:70px;text-align:center;color:#f06868;font-size:11px;line-height:14px;white-space:nowrap;">-0.32</div>
<div style="left:1306.5px;top:878.0px;width:70px;text-align:center;color:#f06868;font-size:11px;line-height:14px;white-space:nowrap;">-0.36</div>
<div style="left:1458.0px;top:878.0px;width:70px;text-align:center;color:#f06868;font-size:11px;line-height:14px;white-space:nowrap;">-0.45</div>
<div style="left:1534.5px;top:878.0px;width:70px;text-align:center;color:#f06868;font-size:11px;line-height:14px;white-space:nowrap;">-0.45</div>
<div style="left:1611.0px;top:878.0px;width:70px;text-align:center;color:#f06868;font-size:11px;line-height:14px;white-space:nowrap;">-0.38</div>
<div style="left:1687.5px;top:878.0px;width:70px;text-align:center;color:#f06868;font-size:11px;line-height:14px;white-space:nowrap;">-0.26</div>
<div style="left:1000.5999999999999px;top:921.0999999999999px;width:70px;text-align:center;color:#5a74ee;font-size:11px;line-height:14px;white-space:nowrap;">199.07</div>
<div style="left:1077.0px;top:921.0999999999999px;width:70px;text-align:center;color:#5a74ee;font-size:11px;line-height:14px;white-space:nowrap;">275.80</div>
<div style="left:1153.0px;top:921.0999999999999px;width:70px;text-align:center;color:#5a74ee;font-size:11px;line-height:14px;white-space:nowrap;">330.55</div>
<div style="left:1229.5px;top:921.0999999999999px;width:70px;text-align:center;color:#5a74ee;font-size:11px;line-height:14px;white-space:nowrap;">361.73</div>
<div style="left:1306.5px;top:921.0999999999999px;width:70px;text-align:center;color:#5a74ee;font-size:11px;line-height:14px;white-space:nowrap;">381.50</div>
<div style="left:1458.0px;top:921.0999999999999px;width:70px;text-align:center;color:#5a74ee;font-size:11px;line-height:14px;white-space:nowrap;">417.09</div>
<div style="left:1534.5px;top:921.0999999999999px;width:70px;text-align:center;color:#5a74ee;font-size:11px;line-height:14px;white-space:nowrap;">406.24</div>
<div style="left:1611.0px;top:921.0999999999999px;width:70px;text-align:center;color:#5a74ee;font-size:11px;line-height:14px;white-space:nowrap;">355.73</div>
<div style="left:1687.5px;top:921.0999999999999px;width:70px;text-align:center;color:#5a74ee;font-size:11px;line-height:14px;white-space:nowrap;">277.20</div>
<div style="left:1000.5999999999999px;top:942.0px;width:70px;text-align:center;color:#f06868;font-size:11px;line-height:14px;white-space:nowrap;">-291.89</div>
<div style="left:1077.0px;top:942.0px;width:70px;text-align:center;color:#f06868;font-size:11px;line-height:14px;white-space:nowrap;">-367.16</div>
<div style="left:1153.0px;top:942.0px;width:70px;text-align:center;color:#f06868;font-size:11px;line-height:14px;white-space:nowrap;">-419.41</div>
<div style="left:1229.5px;top:942.0px;width:70px;text-align:center;color:#f06868;font-size:11px;line-height:14px;white-space:nowrap;">-451.45</div>
<div style="left:1306.5px;top:942.0px;width:70px;text-align:center;color:#f06868;font-size:11px;line-height:14px;white-space:nowrap;">-480.49</div>
<div style="left:1458.0px;top:942.0px;width:70px;text-align:center;color:#f06868;font-size:11px;line-height:14px;white-space:nowrap;">-545.11</div>
<div style="left:1534.5px;top:942.0px;width:70px;text-align:center;color:#f06868;font-size:11px;line-height:14px;white-space:nowrap;">-525.99</div>
<div style="left:1611.0px;top:942.0px;width:70px;text-align:center;color:#f06868;font-size:11px;line-height:14px;white-space:nowrap;">-440.07</div>
<div style="left:1687.5px;top:942.0px;width:70px;text-align:center;color:#f06868;font-size:11px;line-height:14px;white-space:nowrap;">-309.37</div>
<div style="left:1382.0px;top:814.5px;width:70px;text-align:center;color:#8a9cf0;font-size:11px;line-height:14px;white-space:nowrap;">24</div>
<div style="left:1382.0px;top:825.5px;width:70px;text-align:center;color:#8a9cf0;font-size:11px;line-height:14px;white-space:nowrap;">0%</div>
<div style="left:1382.0px;top:857.0px;width:70px;text-align:center;color:#8a9cf0;font-size:11px;line-height:14px;white-space:nowrap;">0.56</div>
<div style="left:1382.0px;top:878.0px;width:70px;text-align:center;color:#f08a8a;font-size:11px;line-height:14px;white-space:nowrap;">-0.41</div>
<div style="left:1382.0px;top:921.0px;width:70px;text-align:center;color:#8a9cf0;font-size:11px;line-height:14px;white-space:nowrap;">401.30</div>
<div style="left:1382.0px;top:942.0px;width:70px;text-align:center;color:#f08a8a;font-size:11px;line-height:14px;white-space:nowrap;">-517.47</div>
<div style="left:951.0px;top:808.8px;width:60px;text-align:center;color:#555;font-size:11px;line-height:14px;white-space:nowrap;">PnL</div>
<div style="left:1792.0px;top:808.8px;width:60px;text-align:center;color:#555;font-size:11px;line-height:14px;white-space:nowrap;">PnL</div>
<div style="left:951.0px;top:850.8px;width:60px;text-align:center;color:#555;font-size:11px;line-height:14px;white-space:nowrap;">Delta</div>
<div style="left:1792.0px;top:850.8px;width:60px;text-align:center;color:#555;font-size:11px;line-height:14px;white-space:nowrap;">Delta</div>
<div style="left:951.0px;top:883.1999999999999px;width:60px;text-align:center;color:#555;font-size:11px;line-height:14px;white-space:nowrap;">Gamma</div>
<div style="left:1792.0px;top:883.1999999999999px;width:60px;text-align:center;color:#555;font-size:11px;line-height:14px;white-space:nowrap;">Gamma</div>
<div style="left:951.0px;top:914.8px;width:60px;text-align:center;color:#555;font-size:11px;line-height:14px;white-space:nowrap;">Theta</div>
<div style="left:1792.0px;top:914.8px;width:60px;text-align:center;color:#555;font-size:11px;line-height:14px;white-space:nowrap;">Theta</div>
<div style="left:951.0px;top:947.0px;width:60px;text-align:center;color:#555;font-size:11px;line-height:14px;white-space:nowrap;">Vega</div>
<div style="left:1792.0px;top:947.0px;width:60px;text-align:center;color:#555;font-size:11px;line-height:14px;white-space:nowrap;">Vega</div>
<div style="left:1387.0px;top:773.0px;width:60px;text-align:center;color:#222;font-size:11px;line-height:14px;white-space:nowrap;">6900</div>
<div style="left:1375px;top:771px;width:49px;height:200px;background:rgba(232,238,247,0.8);border:1px solid #4a5a70;border-radius:6px;box-sizing:border-box"></div>
<div style="left:1369.0px;top:772.5px;width:60px;text-align:center;color:#111;font-size:11px;line-height:14px;white-space:nowrap;">6889.15</div>
<div style="left:1369.0px;top:805.0px;width:60px;text-align:center;color:#ee1111;font-size:11px;line-height:14px;white-space:nowrap;">-6</div>
<div style="left:1369.0px;top:820.0px;width:60px;text-align:center;color:#ee1111;font-size:11px;line-height:14px;white-space:nowrap;">0.0%</div>
<div style="left:1369.0px;top:851.0px;width:60px;text-align:center;color:#1a1ae8;font-size:11px;line-height:14px;white-space:nowrap;">4.95</div>
<div style="left:1369.0px;top:884.0px;width:60px;text-align:center;color:#ee1111;font-size:11px;line-height:14px;white-space:nowrap;">-0.40</div>
<div style="left:1369.0px;top:916.0px;width:60px;text-align:center;color:#1a1ae8;font-size:11px;line-height:14px;white-space:nowrap;">397.29</div>
<div style="left:1369.0px;top:948.0px;width:60px;text-align:center;color:#ee1111;font-size:11px;line-height:14px;white-space:nowrap;">-509.14</div>
<div style="left:950px;top:976px;width:899px;height:25px;background:#29364f;"></div>
<div style="left:1669px;top:982.0px;color:#fff;font-size:12px;line-height:14px;white-space:nowrap;">400%</div>
<svg style="left:1708px;top:980px" width="135" height="18" viewBox="0 0 135 18" shape-rendering="crispEdges"><line x1="3" y1="8.5" x2="11" y2="8.5" stroke="#e8ecf4" stroke-width="1"/><line x1="18" y1="8.5" x2="100" y2="8.5" stroke="#f4e8a4" stroke-width="1"/><line x1="102" y1="8.5" x2="115" y2="8.5" stroke="#e8ecf4" stroke-width="1"/><line x1="66.5" y1="5" x2="66.5" y2="12" stroke="#f4e8a4" stroke-width="1"/><rect x="98" y="4" width="3" height="9" fill="#f8eca8"/><path d="M120 8.5H131M125.5 3V14" stroke="#e8ecf4" stroke-width="1"/></svg>
</body></html>
